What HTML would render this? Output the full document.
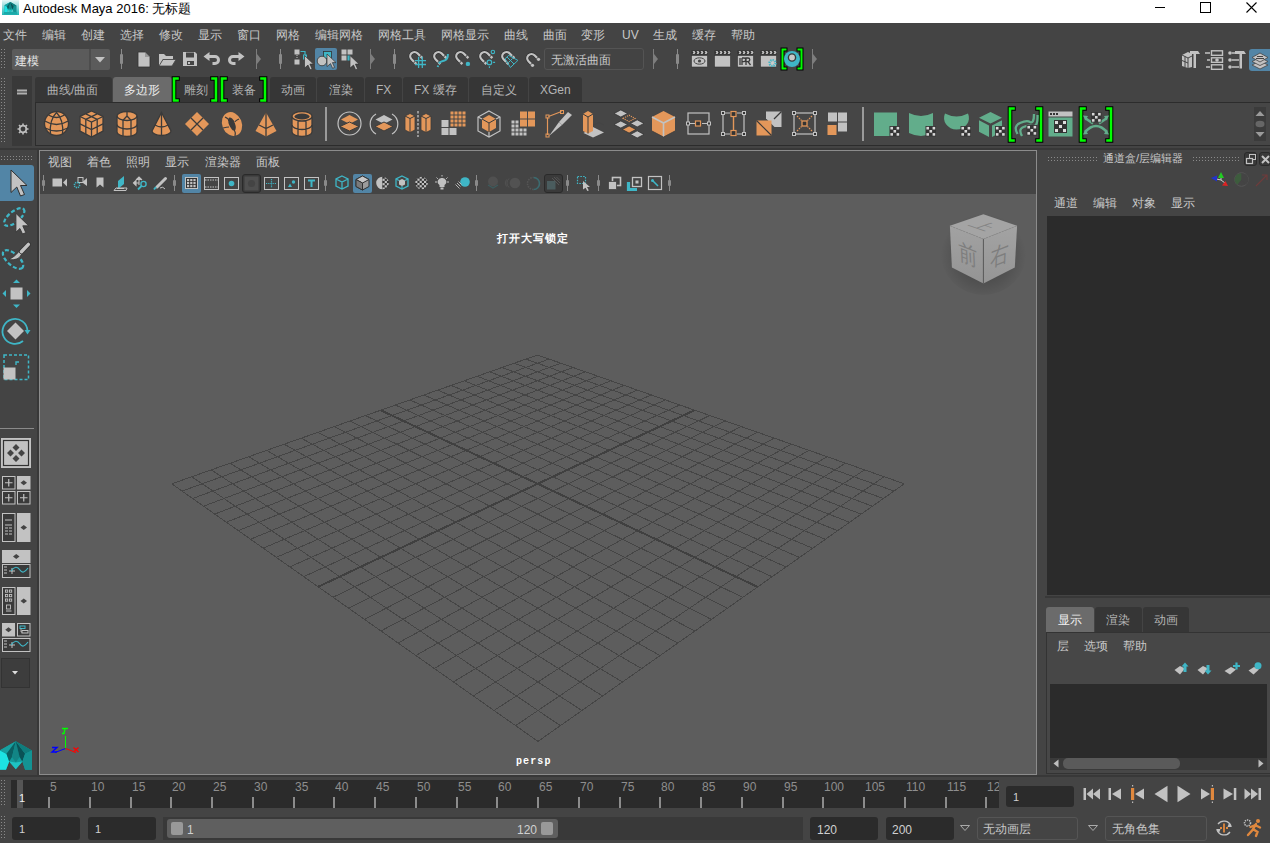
<!DOCTYPE html><html><head><meta charset="utf-8"><style>
*{box-sizing:border-box;margin:0;padding:0}
html,body{width:1270px;height:843px;overflow:hidden;background:#444444}
body{position:relative;font-family:"Liberation Sans",sans-serif;font-size:12px;color:#c8c8c8}
.a{position:absolute}
.t{position:absolute;white-space:nowrap;line-height:1;font-size:12px;color:#c8c8c8}
svg{position:absolute;overflow:visible}
</style></head><body><div class="a" style="left:0px;top:0px;width:1270px;height:23px;background:#fff"></div>
<svg style="left:2px;top:0px;" width="17" height="16" viewBox="0 0 17 16"><defs><linearGradient id="tg" x1="0" y1="0" x2="0" y2="1"><stop offset="0" stop-color="#e6f6f6"/><stop offset="1" stop-color="#1fb5b5"/></linearGradient></defs><rect x="0" y="0" width="17" height="15" fill="url(#tg)"/><g transform="translate(2.5 1.5) scale(0.37)"><path d="M0 10.2L15.8 1.2L31.9 10.5V29.8H25.1L22.4 21.6L15.8 29.3L9.2 21.6L6 29.8H0Z" fill="#129a9a"/><path d="M0 10.5L6.5 14L9.2 21.6L6 29.8H0Z" fill="#1de3e3"/><path d="M0 10.2L15.8 1.2L6.5 13.8Z" fill="#17a0a0"/><path d="M15.8 1.2L6.5 13.8L9.2 21.6L12 17Z" fill="#0b5f62"/><path d="M15.8 1.2L12 17L15.8 22.5L19.6 17Z" fill="#128585"/><path d="M15.8 1.2L19.6 17L22.4 21.6L25.1 13.8Z" fill="#0a5256"/><path d="M15.8 1.2L31.9 10.5L25.1 13.8Z" fill="#0f7c7c"/><path d="M25.1 13.8L31.9 10.5V29.8H25.1L22.4 21.6Z" fill="#149393"/><path d="M9.2 21.6L15.8 22.5L22.4 21.6L15.8 29.3Z" fill="#1ec2c2"/></g><rect x="2" y="12" width="13" height="2.5" fill="#1aa9a9"/></svg>
<div class="t" style="left:23px;top:2px;font-size:13px;color:#000;">Autodesk Maya 2016: 无标题</div>
<div class="a" style="left:1155px;top:7px;width:10px;height:1px;background:#000"></div>
<div class="a" style="left:1200px;top:2px;width:11px;height:11px;border:1px solid #000"></div>
<svg style="left:1246px;top:2px;" width="11" height="11" viewBox="0 0 11 11"><path d="M0.5 0.5L10.5 10.5M10.5 0.5L0.5 10.5" stroke="#000" stroke-width="1.1"/></svg>
<div class="t" style="left:3px;top:29px;font-size:12px;color:#c8c8c8;">文件</div>
<div class="t" style="left:42px;top:29px;font-size:12px;color:#c8c8c8;">编辑</div>
<div class="t" style="left:81px;top:29px;font-size:12px;color:#c8c8c8;">创建</div>
<div class="t" style="left:120px;top:29px;font-size:12px;color:#c8c8c8;">选择</div>
<div class="t" style="left:159px;top:29px;font-size:12px;color:#c8c8c8;">修改</div>
<div class="t" style="left:198px;top:29px;font-size:12px;color:#c8c8c8;">显示</div>
<div class="t" style="left:237px;top:29px;font-size:12px;color:#c8c8c8;">窗口</div>
<div class="t" style="left:276px;top:29px;font-size:12px;color:#c8c8c8;">网格</div>
<div class="t" style="left:315px;top:29px;font-size:12px;color:#c8c8c8;">编辑网格</div>
<div class="t" style="left:378px;top:29px;font-size:12px;color:#c8c8c8;">网格工具</div>
<div class="t" style="left:441px;top:29px;font-size:12px;color:#c8c8c8;">网格显示</div>
<div class="t" style="left:504px;top:29px;font-size:12px;color:#c8c8c8;">曲线</div>
<div class="t" style="left:543px;top:29px;font-size:12px;color:#c8c8c8;">曲面</div>
<div class="t" style="left:581px;top:29px;font-size:12px;color:#c8c8c8;">变形</div>
<div class="t" style="left:622px;top:29px;font-size:12px;color:#c8c8c8;">UV</div>
<div class="t" style="left:653px;top:29px;font-size:12px;color:#c8c8c8;">生成</div>
<div class="t" style="left:692px;top:29px;font-size:12px;color:#c8c8c8;">缓存</div>
<div class="t" style="left:731px;top:29px;font-size:12px;color:#c8c8c8;">帮助</div>
<div class="a" style="left:1px;top:49px;width:1px;height:1px;background:#8a8a8a;box-shadow:3px 0px #8a8a8a,0px 3px #8a8a8a,3px 3px #8a8a8a,0px 6px #8a8a8a,3px 6px #8a8a8a,0px 9px #8a8a8a,3px 9px #8a8a8a,0px 12px #8a8a8a,3px 12px #8a8a8a,0px 15px #8a8a8a,3px 15px #8a8a8a,0px 18px #8a8a8a,3px 18px #8a8a8a"></div>
<div class="a" style="left:12px;top:49px;width:98px;height:21px;background:#5b5b5b;border-radius:2px"></div>
<div class="a" style="left:89px;top:49px;width:2px;height:21px;background:#4d4d4d"></div>
<svg style="left:95px;top:57px;" width="11" height="6" viewBox="0 0 11 6"><path d="M0 0H10L5 5.5Z" fill="#c2c2c2"/></svg>
<div class="t" style="left:15px;top:55px;font-size:12px;color:#e6e6e6;">建模</div>
<div class="a" style="left:121px;top:49px;width:1px;height:20px;background:#8a8a8a"></div>
<div class="a" style="left:120px;top:54px;width:3px;height:10px;background:#8a8a8a;border-radius:1px"></div>
<svg style="left:137px;top:51px;" width="14" height="17" viewBox="0 0 14 17"><path d="M1 1H8L13 6V16H1Z" fill="#c2c2c2" stroke="#333" stroke-width=".8"/><path d="M8 1V6H13" fill="#9a9a9a"/></svg>
<svg style="left:158px;top:52px;" width="19" height="15" viewBox="0 0 19 15"><path d="M1 2H6L8 4H15V7H5L1 14Z" fill="#c2c2c2"/><path d="M5 7.5H18L14 14H1Z" fill="#c2c2c2" stroke="#444" stroke-width=".8"/></svg>
<svg style="left:182px;top:51px;" width="16" height="16" viewBox="0 0 16 16"><path d="M1 1H13L15 3V15H1Z" fill="#c2c2c2"/><rect x="4" y="1.5" width="8" height="5" fill="#444"/><rect x="5" y="10" width="7" height="4" fill="#444"/><rect x="6" y="11" width="2" height="2" fill="#c2c2c2"/></svg>
<svg style="left:203px;top:52px;" width="19" height="14" viewBox="0 0 19 14"><path d="M0.5 4.5L6.5 0V3H12A5 5 0 0 1 12 13H9.5V10H12A2 2 0 0 0 12 6H6.5V9Z" fill="#c2c2c2"/></svg>
<svg style="left:227px;top:52px;" width="19" height="14" viewBox="0 0 19 14"><path d="M17.5 4.5L11.5 0V3H6A5 5 0 0 0 6 13H8.5V10H6A2 2 0 0 1 6 6H11.5V9Z" fill="#c2c2c2"/></svg>
<div class="a" style="left:256px;top:49px;width:1px;height:20px;background:#7d7d7d"></div>
<svg style="left:257px;top:54px;" width="5" height="10" viewBox="0 0 5 10"><path d="M0 0L4 5L0 10Z" fill="#7d7d7d"/></svg>
<div class="a" style="left:280px;top:49px;width:1px;height:20px;background:#8a8a8a"></div>
<div class="a" style="left:279px;top:54px;width:3px;height:10px;background:#8a8a8a;border-radius:1px"></div>
<svg style="left:294px;top:49px;" width="20" height="20" viewBox="0 0 20 20"><rect x="0.5" y="0.5" width="5" height="5" fill="#c2c2c2"/><rect x="0.5" y="10.5" width="5" height="5" fill="#c2c2c2"/><path d="M3 6V10" stroke="#c2c2c2" stroke-width="1" stroke-dasharray="1 1"/><path d="M6.5 2.5H11V6" stroke="#3fb6c6" stroke-width="1.2" fill="none"/><rect x="9" y="5.5" width="4" height="5" fill="#3fb6c6"/><path d="M0 0L9 8.6H5.4L7.6 13.4L5.6 14.3L3.5 9.6L0 12.6Z" transform="translate(10.5 6.5)" fill="#c2c2c2" stroke="#333" stroke-width=".7"/></svg>
<div class="a" style="left:315px;top:48px;width:22px;height:22px;background:#5285a6;border-radius:2px"></div>
<svg style="left:316px;top:49px;" width="20" height="20" viewBox="0 0 20 20"><rect x="7.5" y="2.5" width="8" height="7" fill="#3fb6c6" stroke="#333" stroke-width=".8"/><circle cx="6" cy="12" r="4.8" fill="#c2c2c2" stroke="#333" stroke-width=".8"/><path d="M0 0L9 8.6H5.4L7.6 13.4L5.6 14.3L3.5 9.6L0 12.6Z" transform="translate(11 5)" fill="#c2c2c2" stroke="#333" stroke-width=".7"/></svg>
<svg style="left:341px;top:49px;" width="20" height="20" viewBox="0 0 20 20"><rect x="0.5" y="0.5" width="5" height="5" fill="#c2c2c2"/><rect x="6.5" y="0.5" width="5" height="5" fill="#c2c2c2"/><rect x="0.5" y="6.5" width="5" height="5" fill="#c2c2c2"/><rect x="6.5" y="6.5" width="3" height="5" fill="#3fb6c6"/><path d="M0 0L9 8.6H5.4L7.6 13.4L5.6 14.3L3.5 9.6L0 12.6Z" transform="translate(9 6.5)" fill="#c2c2c2" stroke="#333" stroke-width=".7"/></svg>
<div class="a" style="left:370px;top:49px;width:1px;height:20px;background:#7d7d7d"></div>
<svg style="left:371px;top:54px;" width="5" height="10" viewBox="0 0 5 10"><path d="M0 0L4 5L0 10Z" fill="#7d7d7d"/></svg>
<div class="a" style="left:394px;top:49px;width:1px;height:20px;background:#8a8a8a"></div>
<div class="a" style="left:393px;top:54px;width:3px;height:10px;background:#8a8a8a;border-radius:1px"></div>
<svg style="left:408px;top:50px;" width="20" height="19" viewBox="0 0 20 19"><path d="M6.1 11.9L3.5 9.3A4.24 4.24 0 0 1 9.5 3.3L12.1 5.9" stroke="#2e2e2e" stroke-width="3.4" fill="none"/><path d="M6.1 11.9L3.5 9.3A4.24 4.24 0 0 1 9.5 3.3L12.1 5.9" stroke="#c2c2c2" stroke-width="2.3" fill="none"/><path d="M7.5 11.6L9.2 13.3L7.5 15L5.8 13.3Z M13.5 5.6L15.2 7.3L13.5 9L11.8 7.3Z" fill="#c2c2c2"/><path d="M10.6 6.8V17.9M14.3 6.8V17.9M7 10.6H18M7 14.5H18" stroke="#3fb6c6" stroke-width="1.3"/></svg>
<svg style="left:432px;top:50px;" width="20" height="19" viewBox="0 0 20 19"><path d="M6.1 11.9L3.5 9.3A4.24 4.24 0 0 1 9.5 3.3L12.1 5.9" stroke="#2e2e2e" stroke-width="3.4" fill="none"/><path d="M6.1 11.9L3.5 9.3A4.24 4.24 0 0 1 9.5 3.3L12.1 5.9" stroke="#c2c2c2" stroke-width="2.3" fill="none"/><path d="M7.5 11.6L9.2 13.3L7.5 15L5.8 13.3Z M13.5 5.6L15.2 7.3L13.5 9L11.8 7.3Z" fill="#c2c2c2"/><path d="M15.9 4.1Q16 9.5 12.5 10.6Q8 11.6 7 13.5M6.2 15.5L5.7 17" stroke="#3fb6c6" stroke-width="2" fill="none"/></svg>
<svg style="left:454px;top:50px;" width="20" height="19" viewBox="0 0 20 19"><path d="M6.1 11.9L3.5 9.3A4.24 4.24 0 0 1 9.5 3.3L12.1 5.9" stroke="#2e2e2e" stroke-width="3.4" fill="none"/><path d="M6.1 11.9L3.5 9.3A4.24 4.24 0 0 1 9.5 3.3L12.1 5.9" stroke="#c2c2c2" stroke-width="2.3" fill="none"/><path d="M7.5 11.6L9.2 13.3L7.5 15L5.8 13.3Z M13.5 5.6L15.2 7.3L13.5 9L11.8 7.3Z" fill="#c2c2c2"/><circle cx="13.9" cy="13.9" r="2.2" fill="#3fb6c6"/></svg>
<svg style="left:478px;top:50px;" width="20" height="19" viewBox="0 0 20 19"><path d="M6.1 11.9L3.5 9.3A4.24 4.24 0 0 1 9.5 3.3L12.1 5.9" stroke="#2e2e2e" stroke-width="3.4" fill="none"/><path d="M6.1 11.9L3.5 9.3A4.24 4.24 0 0 1 9.5 3.3L12.1 5.9" stroke="#c2c2c2" stroke-width="2.3" fill="none"/><path d="M7.5 11.6L9.2 13.3L7.5 15L5.8 13.3Z M13.5 5.6L15.2 7.3L13.5 9L11.8 7.3Z" fill="#c2c2c2"/><circle cx="14.9" cy="1.9" r="1.7" fill="none" stroke="#3fb6c6" stroke-width="1.1"/><circle cx="11.4" cy="12.4" r="2.3" fill="none" stroke="#3fb6c6" stroke-width="1.2"/><path d="M15.1 12.4H17.1M11.4 16.3V17.9" stroke="#3fb6c6" stroke-width="1.1"/></svg>
<svg style="left:500px;top:50px;" width="20" height="19" viewBox="0 0 20 19"><path d="M6.1 11.9L3.5 9.3A4.24 4.24 0 0 1 9.5 3.3L12.1 5.9" stroke="#2e2e2e" stroke-width="3.4" fill="none"/><path d="M6.1 11.9L3.5 9.3A4.24 4.24 0 0 1 9.5 3.3L12.1 5.9" stroke="#c2c2c2" stroke-width="2.3" fill="none"/><path d="M7.5 11.6L9.2 13.3L7.5 15L5.8 13.3Z M13.5 5.6L15.2 7.3L13.5 9L11.8 7.3Z" fill="#c2c2c2"/><path d="M8.6 5.3L17.9 10.4L10.4 17.5L5.1 8.8Z" fill="none" stroke="#3fb6c6" stroke-width="1"/><path d="M7 7L14 14M8.5 12.5L12.5 8.5" stroke="#3fb6c6" stroke-width="1"/></svg>
<svg style="left:525px;top:52px;" width="20" height="19" viewBox="0 0 20 19"><path d="M6.1 11.9L3.5 9.3A4.24 4.24 0 0 1 9.5 3.3L12.1 5.9" stroke="#2e2e2e" stroke-width="3.4" fill="none"/><path d="M6.1 11.9L3.5 9.3A4.24 4.24 0 0 1 9.5 3.3L12.1 5.9" stroke="#c2c2c2" stroke-width="2.3" fill="none"/><circle cx="7.5" cy="13.3" r="1.6" fill="#c2c2c2"/><circle cx="13.5" cy="7.3" r="1.6" fill="#c2c2c2"/></svg>
<div class="a" style="left:544px;top:48px;width:100px;height:22px;border:1px solid #545454;border-radius:3px;background:#434343"></div>
<div class="t" style="left:551px;top:54px;font-size:12px;color:#c8c8c8;">无激活曲面</div>
<div class="a" style="left:653px;top:49px;width:1px;height:20px;background:#7d7d7d"></div>
<svg style="left:654px;top:54px;" width="5" height="10" viewBox="0 0 5 10"><path d="M0 0L4 5L0 10Z" fill="#7d7d7d"/></svg>
<div class="a" style="left:677px;top:49px;width:1px;height:20px;background:#8a8a8a"></div>
<div class="a" style="left:676px;top:54px;width:3px;height:10px;background:#8a8a8a;border-radius:1px"></div>
<svg style="left:691px;top:50px;" width="17" height="18" viewBox="0 0 17 18"><rect x="0.5" y="0.5" width="16" height="4" fill="#2e2e2e"/><path d="M1.5 1H3.5L4.5 2.5L3.5 4H1.5L2.5 2.5ZM5.5 1H7.5L8.5 2.5L7.5 4H5.5L6.5 2.5ZM9.5 1H11.5L12.5 2.5L11.5 4H9.5L10.5 2.5ZM13.5 1H15.5L16.5 2.5L15.5 4H13.5L14.5 2.5Z" fill="#c2c2c2"/><rect x="0.5" y="5.5" width="16" height="11.5" fill="#c2c2c2" stroke="#333" stroke-width=".6"/><ellipse cx="8.5" cy="11" rx="5.5" ry="3.2" fill="none" stroke="#444" stroke-width="1"/><circle cx="8.5" cy="11" r="1.6" fill="#444"/></svg>
<svg style="left:714px;top:50px;" width="17" height="18" viewBox="0 0 17 18"><rect x="0.5" y="0.5" width="16" height="4" fill="#2e2e2e"/><path d="M1.5 1H3.5L4.5 2.5L3.5 4H1.5L2.5 2.5ZM5.5 1H7.5L8.5 2.5L7.5 4H5.5L6.5 2.5ZM9.5 1H11.5L12.5 2.5L11.5 4H9.5L10.5 2.5ZM13.5 1H15.5L16.5 2.5L15.5 4H13.5L14.5 2.5Z" fill="#c2c2c2"/><rect x="0.5" y="5.5" width="16" height="11.5" fill="#c2c2c2" stroke="#333" stroke-width=".6"/></svg>
<svg style="left:737px;top:50px;" width="17" height="18" viewBox="0 0 17 18"><rect x="0.5" y="0.5" width="16" height="4" fill="#2e2e2e"/><path d="M1.5 1H3.5L4.5 2.5L3.5 4H1.5L2.5 2.5ZM5.5 1H7.5L8.5 2.5L7.5 4H5.5L6.5 2.5ZM9.5 1H11.5L12.5 2.5L11.5 4H9.5L10.5 2.5ZM13.5 1H15.5L16.5 2.5L15.5 4H13.5L14.5 2.5Z" fill="#c2c2c2"/><rect x="0.5" y="5.5" width="16" height="11.5" fill="#c2c2c2" stroke="#333" stroke-width=".6"/><path d="M3 8V15M5 8V15H5M5 8H7A1.8 1.8 0 0 1 7 11.6H5M9 15V8H11A1.8 1.8 0 0 1 11 11.6H9M11 11.6L13.5 15" stroke="#3a3a3a" stroke-width="1.3" fill="none"/></svg>
<svg style="left:760px;top:50px;" width="17" height="18" viewBox="0 0 17 18"><rect x="0.5" y="0.5" width="16" height="4" fill="#2e2e2e"/><path d="M1.5 1H3.5L4.5 2.5L3.5 4H1.5L2.5 2.5ZM5.5 1H7.5L8.5 2.5L7.5 4H5.5L6.5 2.5ZM9.5 1H11.5L12.5 2.5L11.5 4H9.5L10.5 2.5ZM13.5 1H15.5L16.5 2.5L15.5 4H13.5L14.5 2.5Z" fill="#c2c2c2"/><rect x="0.5" y="5.5" width="16" height="11.5" fill="#c2c2c2" stroke="#333" stroke-width=".6"/><circle cx="12.5" cy="13" r="3" fill="none" stroke="#3fb6c6" stroke-width="2.2" stroke-dasharray="1.3 1"/><circle cx="12.5" cy="13" r="1.2" fill="#ccc"/></svg>
<svg style="left:781px;top:48px;" width="22" height="22" viewBox="0 0 22 22"><path d="M4.5 1.5H1.5V20.5H4.5M17.5 1.5H20.5V20.5H17.5" stroke="#000" stroke-width="4" fill="none" stroke-linecap="square"/><path d="M4.5 1.5H1.5V20.5H4.5M17.5 1.5H20.5V20.5H17.5" stroke="#00ff00" stroke-width="2" fill="none" stroke-linecap="square"/><circle cx="11" cy="11" r="8" fill="#3fb6c6"/><circle cx="11" cy="9.5" r="3.6" fill="#c8c8c8" stroke="#3a3a3a" stroke-width="1.4"/></svg>
<div class="a" style="left:812px;top:49px;width:1px;height:20px;background:#7d7d7d"></div>
<svg style="left:813px;top:54px;" width="5" height="10" viewBox="0 0 5 10"><path d="M0 0L4 5L0 10Z" fill="#7d7d7d"/></svg>
<svg style="left:1181px;top:50px;" width="20" height="19" viewBox="0 0 20 19"><path d="M1 5L7 2L11 4V17L7 18L1 16Z" fill="#c2c2c2"/><path d="M1 5L7 8V18M7 8L11 6M1 10.5L7 13M4 6.5V17" stroke="#444" stroke-width="1" fill="none"/><path d="M9 1H17L19 4H9Z" fill="#c2c2c2"/><rect x="12.5" y="4" width="2.5" height="14" fill="#c2c2c2"/></svg>
<svg style="left:1204px;top:50px;" width="20" height="19" viewBox="0 0 20 19"><path d="M1 3H6M3 10H6M2 17H6" stroke="#c2c2c2" stroke-width="1.5"/><rect x="7.5" y="0.8" width="11" height="4.5" stroke="#c2c2c2" stroke-width="1.4" fill="none"/><rect x="7.5" y="7.8" width="11" height="4.5" stroke="#c2c2c2" stroke-width="1.4" fill="none"/><circle cx="13" cy="10" r="1.8" fill="#c2c2c2"/><rect x="7.5" y="14.8" width="11" height="4.5" stroke="#c2c2c2" stroke-width="1.4" fill="none"/></svg>
<svg style="left:1228px;top:50px;" width="19" height="19" viewBox="0 0 19 19"><circle cx="2" cy="3" r="1.8" fill="#c2c2c2"/><circle cx="2" cy="10" r="1.8" fill="#c2c2c2"/><circle cx="2" cy="17" r="1.8" fill="#c2c2c2"/><path d="M4 3H7M4 10H11M4 17H11" stroke="#c2c2c2" stroke-width="1.5"/><path d="M7 1H16L18 4H7Z" fill="#c2c2c2"/><rect x="11.5" y="4" width="2.5" height="14.5" fill="#c2c2c2"/></svg>
<div class="a" style="left:1249px;top:49px;width:21px;height:22px;background:#5285a6;border-radius:3px 0 0 3px"></div>
<svg style="left:1251px;top:51px;" width="18" height="18" viewBox="0 0 18 18"><path d="M9 10L17 14L9 18L1 14Z" fill="#c2c2c2" stroke="#444" stroke-width=".8"/><path d="M9 6.5L17 10.5L9 14.5L1 10.5Z" fill="#c2c2c2" stroke="#444" stroke-width=".8"/><path d="M9 2L17 6.5L9 11L1 6.5Z" fill="#c2c2c2" stroke="#444" stroke-width=".8"/><path d="M6 5.5H12M5 7.5H13" stroke="#444" stroke-width="1"/></svg>
<div class="a" style="left:1px;top:78px;width:1px;height:1px;background:#8a8a8a;box-shadow:3px 0px #8a8a8a,0px 3px #8a8a8a,3px 3px #8a8a8a,0px 6px #8a8a8a,3px 6px #8a8a8a,0px 9px #8a8a8a,3px 9px #8a8a8a,0px 12px #8a8a8a,3px 12px #8a8a8a,0px 15px #8a8a8a,3px 15px #8a8a8a,0px 18px #8a8a8a,3px 18px #8a8a8a,0px 21px #8a8a8a,3px 21px #8a8a8a,0px 24px #8a8a8a,3px 24px #8a8a8a,0px 27px #8a8a8a,3px 27px #8a8a8a,0px 30px #8a8a8a,3px 30px #8a8a8a,0px 33px #8a8a8a,3px 33px #8a8a8a,0px 36px #8a8a8a,3px 36px #8a8a8a,0px 39px #8a8a8a,3px 39px #8a8a8a,0px 42px #8a8a8a,3px 42px #8a8a8a,0px 45px #8a8a8a,3px 45px #8a8a8a,0px 48px #8a8a8a,3px 48px #8a8a8a,0px 51px #8a8a8a,3px 51px #8a8a8a,0px 54px #8a8a8a,3px 54px #8a8a8a,0px 57px #8a8a8a,3px 57px #8a8a8a,0px 60px #8a8a8a,3px 60px #8a8a8a,0px 63px #8a8a8a,3px 63px #8a8a8a"></div>
<div class="a" style="left:12px;top:76px;width:20px;height:70px;background:#393939"></div>
<svg style="left:17px;top:89px;" width="11" height="6" viewBox="0 0 11 6"><rect x="0" y="0.5" width="10" height="2" fill="#b0b0b0"/><rect x="0" y="3.5" width="10" height="2" fill="#b0b0b0"/></svg>
<svg style="left:17px;top:123px;" width="12" height="12" viewBox="0 0 12 12"><circle cx="6" cy="6" r="3.3" fill="none" stroke="#bdbdbd" stroke-width="1.8"/><path d="M6 0.5V2.5M6 9.5V11.5M0.5 6H2.5M9.5 6H11.5M2 2L3.4 3.4M8.6 8.6L10 10M10 2L8.6 3.4M3.4 8.6L2 10" stroke="#bdbdbd" stroke-width="1.6"/></svg>
<div class="a" style="left:35px;top:77px;width:77px;height:25px;background:#363636;border-radius:3px 3px 0 0"></div>
<div class="t" style="left:47px;top:84px;font-size:12px;color:#b4b4b4;">曲线/曲面</div>
<div class="a" style="left:113px;top:77px;width:59px;height:25px;background:#6b6b6b;border-radius:3px 3px 0 0"></div>
<div class="t" style="left:124px;top:84px;font-size:12px;color:#eeeeee;">多边形</div>
<div class="a" style="left:172px;top:77px;width:47px;height:25px;background:#363636;border-radius:3px 3px 0 0"></div>
<div class="t" style="left:184px;top:84px;font-size:12px;color:#b4b4b4;">雕刻</div>
<div class="a" style="left:220px;top:77px;width:48px;height:25px;background:#363636;border-radius:3px 3px 0 0"></div>
<div class="t" style="left:232px;top:84px;font-size:12px;color:#b4b4b4;">装备</div>
<div class="a" style="left:270px;top:77px;width:46px;height:25px;background:#363636;border-radius:3px 3px 0 0"></div>
<div class="t" style="left:281px;top:84px;font-size:12px;color:#b4b4b4;">动画</div>
<div class="a" style="left:317px;top:77px;width:47px;height:25px;background:#363636;border-radius:3px 3px 0 0"></div>
<div class="t" style="left:329px;top:84px;font-size:12px;color:#b4b4b4;">渲染</div>
<div class="a" style="left:365px;top:77px;width:37px;height:25px;background:#363636;border-radius:3px 3px 0 0"></div>
<div class="t" style="left:376px;top:84px;font-size:12px;color:#b4b4b4;">FX</div>
<div class="a" style="left:403px;top:77px;width:65px;height:25px;background:#363636;border-radius:3px 3px 0 0"></div>
<div class="t" style="left:414px;top:84px;font-size:12px;color:#b4b4b4;">FX 缓存</div>
<div class="a" style="left:469px;top:77px;width:59px;height:25px;background:#363636;border-radius:3px 3px 0 0"></div>
<div class="t" style="left:481px;top:84px;font-size:12px;color:#b4b4b4;">自定义</div>
<div class="a" style="left:529px;top:77px;width:53px;height:25px;background:#363636;border-radius:3px 3px 0 0"></div>
<div class="t" style="left:540px;top:84px;font-size:12px;color:#b4b4b4;">XGen</div>
<svg style="left:172px;top:77px;" width="7" height="25" viewBox="0 0 7 25"><path d="M5.5 1.5H2V23.5H5.5" stroke="#000" stroke-width="4.6" fill="none" stroke-linecap="square"/><path d="M5.5 1.5H2V23.5H5.5" stroke="#00ff00" stroke-width="2.6" fill="none" stroke-linecap="square"/></svg>
<svg style="left:212px;top:77px;" width="7" height="25" viewBox="0 0 7 25"><path d="M0.5 1.5H4V23.5H0.5" stroke="#000" stroke-width="4.6" fill="none" stroke-linecap="square"/><path d="M0.5 1.5H4V23.5H0.5" stroke="#00ff00" stroke-width="2.6" fill="none" stroke-linecap="square"/></svg>
<svg style="left:220px;top:77px;" width="7" height="25" viewBox="0 0 7 25"><path d="M5.5 1.5H2V23.5H5.5" stroke="#000" stroke-width="4.6" fill="none" stroke-linecap="square"/><path d="M5.5 1.5H2V23.5H5.5" stroke="#00ff00" stroke-width="2.6" fill="none" stroke-linecap="square"/></svg>
<svg style="left:261px;top:77px;" width="7" height="25" viewBox="0 0 7 25"><path d="M0.5 1.5H4V23.5H0.5" stroke="#000" stroke-width="4.6" fill="none" stroke-linecap="square"/><path d="M0.5 1.5H4V23.5H0.5" stroke="#00ff00" stroke-width="2.6" fill="none" stroke-linecap="square"/></svg>
<div class="a" style="left:35px;top:102px;width:1235px;height:44px;border:1px solid #2c2c2c;border-right:none;background:#464646"></div>
<svg style="left:44px;top:111px;" width="26" height="26" viewBox="0 0 26 26"><circle cx="12.5" cy="12.5" r="12" fill="#e3975a"/><g stroke="#3a3a3a" stroke-width="1.3" fill="none"><circle cx="12.5" cy="12.5" r="12"/><path d="M4.5 4Q12.5 9 20.5 4M0.8 10Q12.5 17 24.2 10M1.2 17Q12.5 23 23.8 17"/><path d="M12.5 1.5Q5 9 6.5 23.5M12.5 1.5Q20 9 18.5 23.5"/></g></svg>
<svg style="left:79px;top:110px;" width="25" height="28" viewBox="0 0 25 28"><path d="M12.5 1L24 6.5V21L12.5 27L1 21V6.5Z" fill="#e3975a"/><g stroke="#3a3a3a" stroke-width="1.3" fill="none"><path d="M12.5 1L24 6.5V21L12.5 27L1 21V6.5Z"/><path d="M1 6.5L12.5 12L24 6.5M12.5 12V27"/><path d="M6.8 3.8L18.2 9.3M18.2 3.8L6.8 9.3M6.8 9.3V24M18.2 9.3V24M1 13.8L12.5 19.5L24 13.8"/></g></svg>
<svg style="left:116px;top:111px;" width="22" height="26" viewBox="0 0 22 26"><path d="M1 5A10 4.5 0 0 1 21 5V21A10 4.5 0 0 1 1 21Z" fill="#e3975a"/><g stroke="#3a3a3a" stroke-width="1.3" fill="none"><path d="M1 5A10 4.5 0 0 1 21 5V21A10 4.5 0 0 1 1 21Z"/><path d="M1 5A10 4.5 0 0 0 21 5M1 13.5A10 4.5 0 0 0 21 13.5"/><path d="M11 5V0.5M11 5L7 9.3V25.3M11 5L15 9.3V25.3"/></g></svg>
<svg style="left:151px;top:112px;" width="21" height="25" viewBox="0 0 21 25"><path d="M10.5 0.5L20 19A9.5 4.5 0 0 1 1 19Z" fill="#e3975a"/><g stroke="#3a3a3a" stroke-width="1.3" fill="none"><path d="M10.5 0.5L20 19A9.5 4.5 0 0 1 1 19Z"/><path d="M10.5 0.5V24M4 13Q10.5 17 17 13"/></g></svg>
<svg style="left:184px;top:111px;" width="26" height="26" viewBox="0 0 26 26"><path d="M13 1L25 13L13 25L1 13Z" fill="#e3975a"/><g stroke="#3a3a3a" stroke-width="1.3"><path d="M7 7L19 19M19 7L7 19"/></g></svg>
<svg style="left:221px;top:111px;" width="22" height="26" viewBox="0 0 22 26"><ellipse cx="11" cy="13" rx="9.8" ry="12.2" transform="rotate(-22 11 13)" fill="#e3975a"/><ellipse cx="11" cy="13" rx="3" ry="7" transform="rotate(-22 11 13)" fill="#3a3a3a"/><g stroke="#3a3a3a" stroke-width="1.2" fill="none"><path d="M4 6Q8 8 8 10M18 8Q14 10 14 11M2 17Q6 16 8 16M13 18Q15 22 14 25"/></g></svg>
<svg style="left:255px;top:112px;" width="22" height="25" viewBox="0 0 22 25"><path d="M11 0.5L21.5 19L11 24.5L0.5 19Z" fill="#e3975a"/><g stroke="#3a3a3a" stroke-width="1.3" fill="none"><path d="M11 0.5V24.5M4 13L11 16.5L18 13"/></g></svg>
<svg style="left:291px;top:111px;" width="22" height="26" viewBox="0 0 22 26"><path d="M1 5A10 4.5 0 0 1 21 5V21A10 4.5 0 0 1 1 21Z" fill="#e3975a"/><ellipse cx="11" cy="5.5" rx="7.5" ry="3" fill="#3a3a3a"/><g stroke="#3a3a3a" stroke-width="1.3" fill="none"><path d="M1 5A10 4.5 0 0 1 21 5V21A10 4.5 0 0 1 1 21Z"/><path d="M1 5.5A10 4.5 0 0 0 21 5.5M1 14A10 4.5 0 0 0 21 14M7 10V25M15 10V25"/></g></svg>
<div class="a" style="left:325px;top:107px;width:2px;height:34px;background:#9a9a9a"></div>
<svg style="left:337px;top:111px;" width="25" height="26" viewBox="0 0 25 26"><circle cx="12.5" cy="12.5" r="11.5" fill="none" stroke="#c2c2c2" stroke-width="1.2"/><path d="M12.5 4L21 8.5L12.5 13L4 8.5Z" fill="#e3975a"/><path d="M12.5 11L22 15.5L12.5 20L3 15.5Z" fill="#e3975a" stroke="#3a3a3a" stroke-width="1"/></svg>
<svg style="left:371px;top:111px;" width="26" height="26" viewBox="0 0 26 26"><path d="M5 3A11.5 11.5 0 0 0 5 23M21 3A11.5 11.5 0 0 1 21 23" fill="none" stroke="#c2c2c2" stroke-width="1.2"/><path d="M13 4L21.5 8.5L13 13L4.5 8.5Z" fill="#c2c2c2"/><path d="M13 11L22 15.5L13 20L4 15.5Z" fill="#e3975a" stroke="#3a3a3a" stroke-width="1"/></svg>
<svg style="left:404px;top:110px;" width="28" height="28" viewBox="0 0 28 28"><path d="M1 6L6 3.5L11 6V20L6 22.5L1 20Z" fill="#e3975a" stroke="#3a3a3a" stroke-width=".8"/><path d="M1 6L6 8.5L11 6M6 8.5V22.5" stroke="#3a3a3a" stroke-width="1" fill="none"/><path d="M17 6L22 3.5L27 6V20L22 22.5L17 20Z" fill="#e3975a" stroke="#3a3a3a" stroke-width=".8"/><path d="M17 6L22 8.5L27 6M22 8.5V22.5" stroke="#3a3a3a" stroke-width="1" fill="none"/><path d="M14 1V27" stroke="#c2c2c2" stroke-width="1.3" stroke-dasharray="2.5 1.5"/></svg>
<svg style="left:441px;top:111px;" width="25" height="25" viewBox="0 0 25 25"><g fill="#e3975a"><rect x="9.5" y="0.5" width="3" height="3"/><rect x="9.5" y="4.5" width="3" height="3"/><rect x="9.5" y="8.5" width="3" height="3"/><rect x="9.5" y="12.5" width="3" height="3"/><rect x="13.5" y="0.5" width="3" height="3"/><rect x="13.5" y="4.5" width="3" height="3"/><rect x="13.5" y="8.5" width="3" height="3"/><rect x="13.5" y="12.5" width="3" height="3"/><rect x="17.5" y="0.5" width="3" height="3"/><rect x="17.5" y="4.5" width="3" height="3"/><rect x="17.5" y="8.5" width="3" height="3"/><rect x="17.5" y="12.5" width="3" height="3"/><rect x="21.5" y="0.5" width="3" height="3"/><rect x="21.5" y="4.5" width="3" height="3"/><rect x="21.5" y="8.5" width="3" height="3"/><rect x="21.5" y="12.5" width="3" height="3"/></g><rect x="0.5" y="9" width="7" height="7" fill="#c2c2c2"/><rect x="0.5" y="17" width="7" height="7" fill="#c2c2c2"/><rect x="8.5" y="17" width="7" height="7" fill="#c2c2c2"/></svg>
<svg style="left:477px;top:110px;" width="24" height="28" viewBox="0 0 24 28"><path d="M12 1L23 7V21L12 27L1 21V7Z" fill="none" stroke="#c2c2c2" stroke-width="1.2"/><path d="M12 5L19 9V18L12 22L5 18V9Z" fill="#e3975a"/><path d="M5 9L12 13L19 9M12 13V22" stroke="#3a3a3a" stroke-width="1" fill="none"/><path d="M1 7L5 9M23 7L19 9M12 22V27" stroke="#c2c2c2" stroke-width="1.2"/></svg>
<svg style="left:511px;top:111px;" width="25" height="25" viewBox="0 0 25 25"><g fill="#e3975a"><rect x="9" y="0.5" width="7" height="7"/><rect x="17" y="0.5" width="7" height="7"/><rect x="9" y="8.5" width="7" height="7"/><rect x="17" y="8.5" width="7" height="7"/></g><g fill="#c2c2c2"><rect x="0.5" y="9.5" width="3" height="3"/><rect x="0.5" y="13.5" width="3" height="3"/><rect x="0.5" y="17.5" width="3" height="3"/><rect x="0.5" y="21.5" width="3" height="3"/><rect x="4.5" y="9.5" width="3" height="3"/><rect x="4.5" y="13.5" width="3" height="3"/><rect x="4.5" y="17.5" width="3" height="3"/><rect x="4.5" y="21.5" width="3" height="3"/><rect x="8.5" y="17.5" width="3" height="3"/><rect x="8.5" y="21.5" width="3" height="3"/><rect x="12.5" y="17.5" width="3" height="3"/><rect x="12.5" y="21.5" width="3" height="3"/></g></svg>
<svg style="left:545px;top:110px;" width="29" height="28" viewBox="0 0 29 28"><path d="M3.5 6.5L16.5 1.5M2.5 7.5V25" stroke="#e3975a" stroke-width="1.2"/><rect x="1" y="5" width="3" height="3" fill="none" stroke="#e3975a" stroke-width="1"/><rect x="15.5" y="0.5" width="3" height="3" fill="none" stroke="#e3975a" stroke-width="1"/><rect x="1" y="24" width="3" height="3" fill="none" stroke="#e3975a" stroke-width="1"/><path d="M23 2L27 5L17 15L14 12Z" fill="#c2c2c2"/><path d="M14 12L17 15L4 26Z" fill="#c2c2c2"/></svg>
<svg style="left:582px;top:110px;" width="24" height="28" viewBox="0 0 24 28"><path d="M11 17L22 22.5L11 27.5L1.5 23Z" fill="#c2c2c2"/><path d="M6 12L11.5 15L17 12.5L22 15" stroke="#444" stroke-width="1" fill="none"/><path d="M1 4L6 1L11 4V21L6 23.5L1 21Z" fill="#e3975a"/><path d="M1 4L6 7L11 4M6 7V23.5" stroke="#3a3a3a" stroke-width="1" fill="none"/></svg>
<svg style="left:613px;top:108px;" width="32" height="32" viewBox="0 0 32 32"><path d="M1.0 5.5L7.8 1.9L14.6 5.5L7.8 9.1Z" fill="#c2c2c2" stroke="#333" stroke-width=".8" /><path d="M10.100000000000001 10.4L16.1 7.2L22.1 10.4L16.1 13.600000000000001Z" fill="none" stroke="#e3975a" stroke-width="1.1" stroke-dasharray="1.2 1"/><path d="M17.4 15.4L24.2 11.8L31.0 15.4L24.2 19.0Z" fill="#c2c2c2" stroke="#333" stroke-width=".8" /><path d="M1.0 16.5L7.8 12.9L14.6 16.5L7.8 20.1Z" fill="#c2c2c2" stroke="#333" stroke-width=".8" /><path d="M9.3 21.5L16.1 17.9L22.900000000000002 21.5L16.1 25.1Z" fill="#e3975a" stroke="#333" stroke-width=".8" /><path d="M17.4 26.4L24.2 22.799999999999997L31.0 26.4L24.2 30.0Z" fill="#c2c2c2" stroke="#333" stroke-width=".8" /></svg>
<svg style="left:651px;top:110px;" width="25" height="28" viewBox="0 0 25 28"><path d="M12.5 1L24 7V21L12.5 27L1 21V7Z" fill="#e3975a"/><path d="M1 7L12.5 13L24 7M12.5 13V27" stroke="#c2c2c2" stroke-width="1.6" fill="none"/><path d="M1 21L12.5 27L24 21" stroke="#3a3a3a" stroke-width=".8" fill="none"/></svg>
<svg style="left:686px;top:112px;" width="25" height="23" viewBox="0 0 25 23"><rect x="2" y="1" width="21" height="21" fill="none" stroke="#c2c2c2" stroke-width="1.2"/><path d="M4 11.5H9M16 11.5H21" stroke="#c2c2c2" stroke-width="1.2"/><rect x="0.5" y="10" width="3" height="3" fill="#333" stroke="#c2c2c2" stroke-width="1"/><rect x="21.5" y="10" width="3" height="3" fill="#333" stroke="#c2c2c2" stroke-width="1"/><rect x="9.5" y="9" width="5" height="5" fill="#333" stroke="#e3975a" stroke-width="1.2"/></svg>
<svg style="left:721px;top:111px;" width="25" height="25" viewBox="0 0 25 25"><path d="M2 3V22M23 3V22M4 2H9M16 2H21M4 23H9M16 23H21" stroke="#c2c2c2" stroke-width="1.2"/><path d="M12.5 5V20" stroke="#e3975a" stroke-width="1.4"/><rect x="0.5" y="0.5" width="3" height="3" fill="#333" stroke="#c2c2c2"/><rect x="21.5" y="0.5" width="3" height="3" fill="#333" stroke="#c2c2c2"/><rect x="0.5" y="21.5" width="3" height="3" fill="#333" stroke="#c2c2c2"/><rect x="21.5" y="21.5" width="3" height="3" fill="#333" stroke="#c2c2c2"/><rect x="10" y="0.5" width="5" height="5" fill="#333" stroke="#e3975a" stroke-width="1.2"/><rect x="10" y="19.5" width="5" height="5" fill="#333" stroke="#e3975a" stroke-width="1.2"/></svg>
<svg style="left:756px;top:111px;" width="26" height="26" viewBox="0 0 26 26"><path d="M10 0.5H25.5V16H18.5L10 7.5Z" fill="#c2c2c2"/><path d="M18 8L25.5 0.5" stroke="#3a3a3a" stroke-width="1.2"/><rect x="0.5" y="9.5" width="15" height="15" fill="#e3975a"/><path d="M0.5 9.5L15.5 24.5" stroke="#3a3a3a" stroke-width="1.2"/></svg>
<svg style="left:792px;top:111px;" width="25" height="26" viewBox="0 0 25 26"><rect x="2" y="2" width="21" height="21" fill="none" stroke="#c2c2c2" stroke-width="1.2"/><rect x="0.5" y="0.5" width="3" height="3" fill="#333" stroke="#c2c2c2"/><rect x="21.5" y="0.5" width="3" height="3" fill="#333" stroke="#c2c2c2"/><rect x="0.5" y="21.5" width="3" height="3" fill="#333" stroke="#c2c2c2"/><rect x="21.5" y="21.5" width="3" height="3" fill="#333" stroke="#c2c2c2"/><path d="M5 5L9.5 9.5M20 5L15.5 9.5M5 20L9.5 15.5M20 20L15.5 15.5" stroke="#e3975a" stroke-width="1.2" stroke-dasharray="1.6 1"/><rect x="10" y="10" width="5" height="5" fill="#333" stroke="#e3975a" stroke-width="1.3"/></svg>
<svg style="left:827px;top:112px;" width="24" height="24" viewBox="0 0 24 24"><rect x="1" y="0.5" width="9" height="9" fill="#c2c2c2"/><rect x="11" y="0.5" width="9" height="9" fill="#c2c2c2"/><rect x="11" y="10.5" width="9" height="9" fill="#c2c2c2"/><rect x="0.5" y="13" width="9" height="10" fill="#e3975a"/></svg>
<div class="a" style="left:862px;top:107px;width:2px;height:34px;background:#9a9a9a"></div>
<svg style="left:874px;top:112px;" width="27" height="26" viewBox="0 0 27 26"><rect x="0" y="0.5" width="23" height="23.5" fill="#62ad8b"/><rect x="15.5" y="14" width="10.5" height="10.5" fill="#353535"/><rect x="16.4" y="14.9" width="2.6" height="2.6" fill="#d8d8d8"/><rect x="16.4" y="21.1" width="2.6" height="2.6" fill="#d8d8d8"/><rect x="19.5" y="18.0" width="2.6" height="2.6" fill="#d8d8d8"/><rect x="22.6" y="14.9" width="2.6" height="2.6" fill="#d8d8d8"/><rect x="22.6" y="21.1" width="2.6" height="2.6" fill="#d8d8d8"/></svg>
<svg style="left:909px;top:112px;" width="27" height="26" viewBox="0 0 27 26"><path d="M0 1Q12 7 24 1V21Q12 27 0 21Z" fill="#62ad8b"/><rect x="16.5" y="14" width="10.5" height="10.5" fill="#353535"/><rect x="17.4" y="14.9" width="2.6" height="2.6" fill="#d8d8d8"/><rect x="17.4" y="21.1" width="2.6" height="2.6" fill="#d8d8d8"/><rect x="20.5" y="18.0" width="2.6" height="2.6" fill="#d8d8d8"/><rect x="23.6" y="14.9" width="2.6" height="2.6" fill="#d8d8d8"/><rect x="23.6" y="21.1" width="2.6" height="2.6" fill="#d8d8d8"/></svg>
<svg style="left:944px;top:112px;" width="27" height="26" viewBox="0 0 27 26"><path d="M1 1.5Q12.5 7.5 24 1.5A12.5 11.5 0 1 1 1 1.5Z" fill="#62ad8b"/><rect x="16.5" y="14" width="10.5" height="10.5" fill="#353535"/><rect x="17.4" y="14.9" width="2.6" height="2.6" fill="#d8d8d8"/><rect x="17.4" y="21.1" width="2.6" height="2.6" fill="#d8d8d8"/><rect x="20.5" y="18.0" width="2.6" height="2.6" fill="#d8d8d8"/><rect x="23.6" y="14.9" width="2.6" height="2.6" fill="#d8d8d8"/><rect x="23.6" y="21.1" width="2.6" height="2.6" fill="#d8d8d8"/></svg>
<svg style="left:978px;top:111px;" width="28" height="27" viewBox="0 0 28 27"><path d="M12.5 1L24 6.8L12.5 12.5L1 6.8Z" fill="#62ad8b"/><path d="M1 9.3L11 14.5V26L1 20.8Z" fill="#62ad8b"/><path d="M14 14.5L24 9.3V20.8L14 26Z" fill="#62ad8b"/><rect x="17" y="15" width="10.5" height="10.5" fill="#353535"/><rect x="17.9" y="15.9" width="2.6" height="2.6" fill="#d8d8d8"/><rect x="17.9" y="22.1" width="2.6" height="2.6" fill="#d8d8d8"/><rect x="21.0" y="19.0" width="2.6" height="2.6" fill="#d8d8d8"/><rect x="24.1" y="15.9" width="2.6" height="2.6" fill="#d8d8d8"/><rect x="24.1" y="22.1" width="2.6" height="2.6" fill="#d8d8d8"/></svg>
<svg style="left:1008px;top:107px;" width="7" height="35" viewBox="0 0 7 35"><path d="M5.5 1.5H2V33.5H5.5" stroke="#000" stroke-width="4.6" fill="none" stroke-linecap="square"/><path d="M5.5 1.5H2V33.5H5.5" stroke="#00ff00" stroke-width="2.6" fill="none" stroke-linecap="square"/></svg>
<svg style="left:1037px;top:107px;" width="7" height="35" viewBox="0 0 7 35"><path d="M0.5 1.5H4V33.5H0.5" stroke="#000" stroke-width="4.6" fill="none" stroke-linecap="square"/><path d="M0.5 1.5H4V33.5H0.5" stroke="#00ff00" stroke-width="2.6" fill="none" stroke-linecap="square"/></svg>
<svg style="left:1014px;top:111px;" width="26" height="26" viewBox="0 0 26 26"><path d="M3.5 23Q-1 15 6 12Q13 9 16 11Q20 13 20 3M8 25Q4 18 9.5 16Q15 14 19 15Q24 16 23.5 4" stroke="#62ad8b" stroke-width="2.3" fill="none"/><rect x="12.5" y="14" width="10.5" height="10.5" fill="#353535"/><rect x="13.4" y="14.9" width="2.6" height="2.6" fill="#d8d8d8"/><rect x="13.4" y="21.1" width="2.6" height="2.6" fill="#d8d8d8"/><rect x="16.5" y="18.0" width="2.6" height="2.6" fill="#d8d8d8"/><rect x="19.6" y="14.9" width="2.6" height="2.6" fill="#d8d8d8"/><rect x="19.6" y="21.1" width="2.6" height="2.6" fill="#d8d8d8"/></svg>
<svg style="left:1048px;top:111px;" width="25" height="26" viewBox="0 0 25 26"><rect x="0.5" y="0.5" width="24" height="5" fill="#c2c2c2"/><rect x="2" y="2" width="2" height="2" fill="#333"/><rect x="5" y="2" width="2" height="2" fill="#333"/><rect x="8" y="2" width="2" height="2" fill="#333"/><rect x="0.5" y="6.5" width="24" height="19" fill="#62ad8b"/><rect x="6" y="9" width="13" height="13" fill="#333"/><rect x="7" y="10" width="3" height="3" fill="#ddd"/><rect x="7" y="18" width="3" height="3" fill="#ddd"/><rect x="11" y="14" width="3" height="3" fill="#ddd"/><rect x="15" y="10" width="3" height="3" fill="#ddd"/><rect x="15" y="18" width="3" height="3" fill="#ddd"/></svg>
<svg style="left:1079px;top:107px;" width="7" height="35" viewBox="0 0 7 35"><path d="M5.5 1.5H2V33.5H5.5" stroke="#000" stroke-width="4.6" fill="none" stroke-linecap="square"/><path d="M5.5 1.5H2V33.5H5.5" stroke="#00ff00" stroke-width="2.6" fill="none" stroke-linecap="square"/></svg>
<svg style="left:1107px;top:107px;" width="7" height="35" viewBox="0 0 7 35"><path d="M0.5 1.5H4V33.5H0.5" stroke="#000" stroke-width="4.6" fill="none" stroke-linecap="square"/><path d="M0.5 1.5H4V33.5H0.5" stroke="#00ff00" stroke-width="2.6" fill="none" stroke-linecap="square"/></svg>
<svg style="left:1082px;top:112px;" width="28" height="26" viewBox="0 0 28 26"><path d="M3 6L11 11.5M25 6L17 11.5M3 20Q14 8 25 20" stroke="#62ad8b" stroke-width="2.6" fill="none"/><path d="M1 3.5L6 4L3.5 8.5Z M27 3.5L22 4L24.5 8.5Z M1 22.5L6 22L3.5 17.5Z M27 22.5L22 22L24.5 17.5Z" fill="#62ad8b"/><rect x="9" y="0" width="10.5" height="10.5" fill="#353535"/><rect x="9.9" y="0.9" width="2.6" height="2.6" fill="#d8d8d8"/><rect x="9.9" y="7.1" width="2.6" height="2.6" fill="#d8d8d8"/><rect x="13.0" y="4.0" width="2.6" height="2.6" fill="#d8d8d8"/><rect x="16.1" y="0.9" width="2.6" height="2.6" fill="#d8d8d8"/><rect x="16.1" y="7.1" width="2.6" height="2.6" fill="#d8d8d8"/></svg>
<div class="a" style="left:1254px;top:107px;width:12px;height:34px;background:#3b3b3b"></div>
<svg style="left:1254px;top:109px;" width="12" height="30" viewBox="0 0 12 30"><path d="M1.5 7L6 2L10.5 7Z" fill="#9a9a9a"/><ellipse cx="6" cy="15" rx="4.5" ry="3.2" fill="#666"/><path d="M1.5 23L6 28L10.5 23Z" fill="#9a9a9a"/></svg>
<div class="a" style="left:0px;top:148px;width:1270px;height:2px;background:#383838"></div>
<div class="a" style="left:37px;top:150px;width:2px;height:627px;background:#383838"></div>
<div class="a" style="left:1px;top:156px;width:1px;height:1px;background:#8a8a8a;box-shadow:3px 0px #8a8a8a,6px 0px #8a8a8a,9px 0px #8a8a8a,12px 0px #8a8a8a,15px 0px #8a8a8a,18px 0px #8a8a8a,21px 0px #8a8a8a,24px 0px #8a8a8a,27px 0px #8a8a8a,30px 0px #8a8a8a,0px 3px #8a8a8a,3px 3px #8a8a8a,6px 3px #8a8a8a,9px 3px #8a8a8a,12px 3px #8a8a8a,15px 3px #8a8a8a,18px 3px #8a8a8a,21px 3px #8a8a8a,24px 3px #8a8a8a,27px 3px #8a8a8a,30px 3px #8a8a8a"></div>
<div class="a" style="left:0px;top:165px;width:34px;height:36px;background:#5285a6;border-radius:0 3px 3px 0"></div>
<svg style="left:10px;top:169px;" width="18" height="28" viewBox="0 0 18 28"><path d="M1 1L17 16.5H10.5L14.5 25.5L10.5 27L6.8 18L1 23.5Z" fill="#c2c2c2" stroke="#2f2f2f" stroke-width="1"/></svg>
<svg style="left:2px;top:206px;" width="28" height="29" viewBox="0 0 28 29"><ellipse cx="12.25" cy="11" rx="12.3" ry="5.4" transform="rotate(-39 12.25 11)" fill="none" stroke="#3fb6c6" stroke-width="2.2" stroke-dasharray="4 2.2"/><path d="M13.9 7.3L26.7 19.8H20.8L23.8 26.7L20.5 28L17.9 22.5L13.9 26.2Z" fill="#c2c2c2" stroke="#333" stroke-width=".9"/></svg>
<svg style="left:2px;top:242px;" width="29" height="30" viewBox="0 0 29 30"><ellipse cx="11.05" cy="17.5" rx="12.5" ry="5.8" transform="rotate(41 11.05 17.5)" fill="none" stroke="#3fb6c6" stroke-width="2.2" stroke-dasharray="4 2.2"/><path d="M26.4 2.4L19.4 9.7" stroke="#333" stroke-width="5" stroke-linecap="round"/><path d="M26.4 2.4L19.4 9.7" stroke="#c2c2c2" stroke-width="3.4" stroke-linecap="round"/><path d="M16.8 9.8L19.4 12.6Q16.5 18.8 7 17.6Q13 14.5 16.8 9.8Z" fill="#c2c2c2" stroke="#333" stroke-width=".8"/></svg>
<svg style="left:2px;top:279px;" width="29" height="30" viewBox="0 0 29 30"><rect x="8.5" y="8.5" width="12" height="12" fill="#c2c2c2"/><path d="M14.5 0.5L18 4H11Z" fill="#3fb6c6"/><path d="M14.5 29L18 25.5H11Z" fill="#3fb6c6"/><path d="M0.5 14.5L4 11V18Z" fill="#3fb6c6"/><path d="M28.5 14.5L25 11V18Z" fill="#3fb6c6"/></svg>
<svg style="left:1px;top:317px;" width="31" height="29" viewBox="0 0 31 29"><path d="M22 24A12.5 12.5 0 1 1 26.5 14" fill="none" stroke="#3fb6c6" stroke-width="1.8"/><path d="M23.5 13H29.5L26.5 17.5Z" fill="#3fb6c6"/><path d="M14.5 5.5L23 14L14.5 22.5L6 14Z" fill="#c2c2c2"/></svg>
<svg style="left:3px;top:354px;" width="27" height="27" viewBox="0 0 27 27"><rect x="1" y="1" width="24.5" height="24.5" fill="none" stroke="#3fb6c6" stroke-width="1.5" stroke-dasharray="3 2"/><rect x="0.5" y="13.5" width="12" height="12" fill="#c2c2c2"/><path d="M13 11V8H16" stroke="#3fb6c6" stroke-width="1.4" fill="none"/></svg>
<div class="a" style="left:0px;top:428px;width:34px;height:1px;background:#8a8a8a"></div>
<svg style="left:1px;top:438px;" width="30" height="30" viewBox="0 0 30 30"><rect x="1" y="1" width="28" height="28" fill="none" stroke="#c2c2c2" stroke-width="2"/><rect x="2.5" y="2.5" width="25" height="25" fill="#c2c2c2" stroke="#333" stroke-width="1.2"/><path d="M15 6L18.5 9.5L15 13L11.5 9.5ZM15 17L18.5 20.5L15 24L11.5 20.5ZM9.5 11.5L13 15L9.5 18.5L6 15ZM20.5 11.5L24 15L20.5 18.5L17 15Z" fill="#444"/></svg>
<svg style="left:2px;top:476px;" width="29" height="29" viewBox="0 0 29 29"><rect x="0.5" y="0.5" width="12.5" height="12.5" fill="#3a3a3a" stroke="#c2c2c2" stroke-width="1"/><path d="M3 6.75H10.5M6.75 3V10.5" stroke="#c2c2c2" stroke-width="1.2"/><rect x="15" y="0" width="13.5" height="13.5" fill="#c2c2c2"/><path d="M21.75 4.25L25.0 6.75L21.75 9.25L18.5 6.75Z" fill="#444"/><rect x="0.5" y="15.5" width="12.5" height="12.5" fill="#3a3a3a" stroke="#c2c2c2" stroke-width="1"/><path d="M3 21.75H10.5M6.75 18V25.5" stroke="#c2c2c2" stroke-width="1.2"/><rect x="15.5" y="15.5" width="12.5" height="12.5" fill="#3a3a3a" stroke="#c2c2c2" stroke-width="1"/><path d="M18 21.75H25.5M21.75 18V25.5" stroke="#c2c2c2" stroke-width="1.2"/></svg>
<svg style="left:2px;top:513px;" width="29" height="29" viewBox="0 0 29 29"><rect x="0.5" y="0.5" width="12.5" height="28" fill="#3a3a3a" stroke="#c2c2c2" stroke-width="1"/><path d="M3 7H10M3 12H10M3 15H6M7 15H10M3 18H6M7 18H10M3 21H6M7 21H10" stroke="#c2c2c2" stroke-width="1"/><rect x="15" y="0" width="13.5" height="29" fill="#c2c2c2"/><path d="M21.75 12.0L25.0 14.5L21.75 17.0L18.5 14.5Z" fill="#444"/></svg>
<svg style="left:2px;top:550px;" width="29" height="29" viewBox="0 0 29 29"><rect x="0" y="0" width="28.5" height="13" fill="#c2c2c2"/><path d="M14.25 4.0L17.5 6.5L14.25 9.0L11.0 6.5Z" fill="#444"/><rect x="0.5" y="14.5" width="27.5" height="13" fill="#3a3a3a" stroke="#c2c2c2" stroke-width="1"/><path d="M2 17H5M2 20H5M2 23H5M7 21H13M10 18V24" stroke="#c2c2c2" stroke-width="1"/><path d="M9 21Q14 14 18 20Q21 25 26 18" stroke="#3fb6c6" stroke-width="1.2" fill="none"/></svg>
<svg style="left:2px;top:587px;" width="29" height="28" viewBox="0 0 29 28"><rect x="0.5" y="0.5" width="12.5" height="27" fill="#3a3a3a" stroke="#c2c2c2" stroke-width="1"/><g fill="none" stroke="#c2c2c2" stroke-width=".9"><rect x="3.5" y="3" width="2.2" height="2.2"/><rect x="7.5" y="3" width="2.2" height="2.2"/><rect x="3.5" y="7.5" width="2.2" height="2.2"/><rect x="7.5" y="7.5" width="2.2" height="2.2"/><rect x="3.5" y="12" width="2.2" height="2.2"/><rect x="7.5" y="12" width="2.2" height="2.2"/><rect x="4.5" y="18" width="4" height="4"/></g><path d="M4 24H9.5" stroke="#c2c2c2"/><rect x="15" y="0" width="13.5" height="28" fill="#c2c2c2"/><path d="M21.75 11.5L25.0 14L21.75 16.5L18.5 14Z" fill="#444"/></svg>
<svg style="left:2px;top:623px;" width="29" height="29" viewBox="0 0 29 29"><rect x="0" y="0" width="13" height="13.5" fill="#c2c2c2"/><path d="M6.5 4.25L9.75 6.75L6.5 9.25L3.25 6.75Z" fill="#444"/><rect x="15.5" y="0.5" width="12.5" height="12.5" fill="#3a3a3a" stroke="#c2c2c2" stroke-width="1"/><rect x="18" y="3" width="5" height="2.5" fill="none" stroke="#3fb6c6" stroke-width="1"/><rect x="20" y="7.5" width="6" height="2.5" fill="none" stroke="#c2c2c2" stroke-width="1"/><path d="M19 5.5V9H20" stroke="#c2c2c2" stroke-width=".8" fill="none"/><rect x="0.5" y="15.5" width="27.5" height="13" fill="#3a3a3a" stroke="#c2c2c2" stroke-width="1"/><path d="M2 18H5M2 21H5M2 24H5M7 22H13M10 19V25" stroke="#c2c2c2" stroke-width="1"/><path d="M9 22Q14 15 18 21Q21 26 26 19" stroke="#3fb6c6" stroke-width="1.2" fill="none"/></svg>
<div class="a" style="left:1px;top:658px;width:29px;height:30px;background:#3d3d3d;border:1px solid #333"></div>
<svg style="left:12px;top:671px;" width="7" height="4" viewBox="0 0 7 4"><path d="M0 0H6L3 3.5Z" fill="#ddd"/></svg>
<svg style="left:0px;top:740px;" width="32" height="30" viewBox="0 0 32 30"><path d="M0 10.2L15.8 1.2L31.9 10.5V29.8H25.1L22.4 21.6L15.8 29.3L9.2 21.6L6 29.8H0Z" fill="#129a9a"/><path d="M0 10.5L6.5 14L9.2 21.6L6 29.8H0Z" fill="#1de3e3"/><path d="M0 10.2L15.8 1.2L6.5 13.8Z" fill="#17a0a0"/><path d="M15.8 1.2L6.5 13.8L9.2 21.6L12 17Z" fill="#0b5f62"/><path d="M15.8 1.2L12 17L15.8 22.5L19.6 17Z" fill="#128585"/><path d="M15.8 1.2L19.6 17L22.4 21.6L25.1 13.8Z" fill="#0a5256"/><path d="M15.8 1.2L31.9 10.5L25.1 13.8Z" fill="#0f7c7c"/><path d="M25.1 13.8L31.9 10.5V29.8H25.1L22.4 21.6Z" fill="#149393"/><path d="M9.2 21.6L15.8 22.5L22.4 21.6L15.8 29.3Z" fill="#1ec2c2"/></svg>
<div class="a" style="left:39px;top:150px;width:998px;height:625px;border:1px solid #8c8c8c;background:#444"></div>
<div class="a" style="left:40px;top:194px;width:996px;height:580px;background:#5d5d5d"></div>
<div class="t" style="left:48px;top:156px;font-size:12px;color:#c8c8c8;">视图</div>
<div class="t" style="left:87px;top:156px;font-size:12px;color:#c8c8c8;">着色</div>
<div class="t" style="left:126px;top:156px;font-size:12px;color:#c8c8c8;">照明</div>
<div class="t" style="left:165px;top:156px;font-size:12px;color:#c8c8c8;">显示</div>
<div class="t" style="left:205px;top:156px;font-size:12px;color:#c8c8c8;">渲染器</div>
<div class="t" style="left:256px;top:156px;font-size:12px;color:#c8c8c8;">面板</div>
<div class="a" style="left:43px;top:175px;width:1px;height:16px;background:#8a8a8a"></div>
<div class="a" style="left:42px;top:180px;width:3px;height:6px;background:#8a8a8a;border-radius:1px"></div>
<svg style="left:52px;top:177px;" width="16" height="11" viewBox="0 0 16 11"><rect x="0.5" y="1.5" width="9.5" height="8" fill="#c2c2c2"/><path d="M11 5.5L15 1.5V9.5Z" fill="#c2c2c2"/></svg>
<svg style="left:73px;top:177px;" width="15" height="12" viewBox="0 0 15 12"><rect x="5" y="0.5" width="5" height="5" fill="none" stroke="#c2c2c2" stroke-width="1"/><path d="M10 4.5L14 1V9L10 6Z" fill="#c2c2c2"/><circle cx="4" cy="8" r="2.6" fill="none" stroke="#3fb6c6" stroke-width="1.6" stroke-dasharray="1.2 .8"/></svg>
<svg style="left:96px;top:177px;" width="8" height="11" viewBox="0 0 8 11"><path d="M0.5 0.5H7.5V10.5L4 7.5L0.5 10.5Z" fill="#c2c2c2"/></svg>
<svg style="left:113px;top:176px;" width="15" height="15" viewBox="0 0 15 15"><path d="M5 13V5L11 0V8Z" fill="#3fb6c6"/><path d="M1 14.5H13L14 12H3Z" fill="none" stroke="#c2c2c2" stroke-width="1"/><path d="M4 12.5H11" stroke="#c2c2c2"/></svg>
<svg style="left:133px;top:177px;" width="15" height="13" viewBox="0 0 15 13"><path d="M6 1V8M3 3L6 0L9 3M0.5 6L3 3.5V8.5ZM0.5 6H6" stroke="#c2c2c2" stroke-width="1.1" fill="#c2c2c2"/><circle cx="10.5" cy="7" r="2.6" fill="none" stroke="#3fb6c6" stroke-width="1.4"/><path d="M8.5 9L5 12.5" stroke="#3fb6c6" stroke-width="1.8"/></svg>
<svg style="left:153px;top:177px;" width="14" height="13" viewBox="0 0 14 13"><path d="M12.5 1.5L4 10" stroke="#c2c2c2" stroke-width="3" stroke-linecap="round"/><path d="M1 12.5L3 10" stroke="#3fb6c6" stroke-width="2"/><path d="M7 11Q10 9 12 12" stroke="#c2c2c2" stroke-width="1" fill="none"/></svg>
<div class="a" style="left:174px;top:175px;width:1px;height:16px;background:#8a8a8a"></div>
<div class="a" style="left:173px;top:180px;width:3px;height:6px;background:#8a8a8a;border-radius:1px"></div>
<div class="a" style="left:182px;top:174px;width:19px;height:19px;background:#5285a6;border-radius:2px"></div>
<svg style="left:185px;top:177px;" width="13" height="12" viewBox="0 0 13 12"><rect x="0.5" y="0.5" width="12" height="11" fill="#333" stroke="#c2c2c2" stroke-width="1"/><g fill="#c2c2c2"><rect x="2.0" y="2" width="2.2" height="2.2"/><rect x="2.0" y="5" width="2.2" height="2.2"/><rect x="2.0" y="8" width="2.2" height="2.2"/><rect x="5.2" y="2" width="2.2" height="2.2"/><rect x="5.2" y="5" width="2.2" height="2.2"/><rect x="5.2" y="8" width="2.2" height="2.2"/><rect x="8.4" y="2" width="2.2" height="2.2"/><rect x="8.4" y="5" width="2.2" height="2.2"/><rect x="8.4" y="8" width="2.2" height="2.2"/></g></svg>
<svg style="left:204px;top:177px;" width="15" height="13" viewBox="0 0 15 13"><rect x="0.5" y="0.5" width="14" height="12" fill="none" stroke="#c2c2c2" stroke-width="1"/><path d="M1 3H14M1 10H14" stroke="#c2c2c2" stroke-width="1" stroke-dasharray="1.5 1"/></svg>
<svg style="left:224px;top:177px;" width="15" height="13" viewBox="0 0 15 13"><rect x="0.5" y="0.5" width="14" height="12" fill="none" stroke="#c2c2c2" stroke-width="1"/><circle cx="7.5" cy="6.5" r="2.8" fill="#3fb6c6"/></svg>
<div class="a" style="left:242px;top:174px;width:19px;height:19px;background:#3a3a3a;border:1px solid #2a2a2a;border-radius:3px"></div>
<svg style="left:244px;top:176px;" width="15" height="15" viewBox="0 0 15 15"><rect x="0.5" y="0.5" width="14" height="14" fill="#4f4f4f"/><circle cx="7.5" cy="7.5" r="3.6" fill="#444"/></svg>
<svg style="left:264px;top:177px;" width="15" height="13" viewBox="0 0 15 13"><rect x="0.5" y="0.5" width="14" height="12" fill="none" stroke="#c2c2c2" stroke-width="1"/><path d="M2 6.5H13M7.5 2V11" stroke="#3fb6c6" stroke-width="1.2" stroke-dasharray="1.2 1"/></svg>
<svg style="left:284px;top:177px;" width="15" height="13" viewBox="0 0 15 13"><rect x="0.5" y="0.5" width="14" height="12" fill="none" stroke="#c2c2c2" stroke-width="1"/><path d="M4 10L6 6.5L8 10Z" fill="#3fb6c6"/><circle cx="9.5" cy="5" r="1.7" fill="#3fb6c6"/></svg>
<svg style="left:304px;top:177px;" width="15" height="13" viewBox="0 0 15 13"><rect x="0.5" y="0.5" width="14" height="12" fill="none" stroke="#c2c2c2" stroke-width="1"/><path d="M4 3.5H11M7.5 3.5V10" stroke="#3fb6c6" stroke-width="2"/></svg>
<div class="a" style="left:325px;top:175px;width:1px;height:16px;background:#8a8a8a"></div>
<div class="a" style="left:324px;top:180px;width:3px;height:6px;background:#8a8a8a;border-radius:1px"></div>
<svg style="left:335px;top:175px;" width="14" height="15" viewBox="0 0 14 15"><path d="M7 1L13 4V11L7 14L1 11V4Z M1 4L7 7L13 4M7 7V14" fill="none" stroke="#3fb6c6" stroke-width="1.3"/></svg>
<div class="a" style="left:353px;top:174px;width:19px;height:19px;background:#5285a6;border-radius:2px"></div>
<svg style="left:355px;top:175px;" width="15" height="16" viewBox="0 0 15 16"><path d="M7.5 1L14 4.5V11.5L7.5 15L1 11.5V4.5Z" fill="#9c9c9c" stroke="#333" stroke-width="1"/><path d="M1 4.5L7.5 8L14 4.5L7.5 1Z" fill="#c8c8c8" stroke="#333" stroke-width="1"/><path d="M7.5 8V15" stroke="#333" stroke-width="1"/><path d="M1 4.5L7.5 8V15L1 11.5Z" fill="#7a7a7a" stroke="#333" stroke-width="1"/></svg>
<svg style="left:376px;top:176px;" width="13" height="14" viewBox="0 0 13 14"><defs><clipPath id="hc"><circle cx="6.5" cy="7" r="6.3"/></clipPath></defs><path d="M6.5 0.7A6.3 6.3 0 0 0 6.5 13.3Z" fill="#c2c2c2"/><g clip-path="url(#hc)"><rect x="6.5" y="0.5" width="7" height="13" fill="#333"/><rect x="6.5" y="2.7" width="2.2" height="2.2" fill="#c2c2c2"/><rect x="6.5" y="7.1" width="2.2" height="2.2" fill="#c2c2c2"/><rect x="6.5" y="11.5" width="2.2" height="2.2" fill="#c2c2c2"/><rect x="8.7" y="0.5" width="2.2" height="2.2" fill="#c2c2c2"/><rect x="8.7" y="4.9" width="2.2" height="2.2" fill="#c2c2c2"/><rect x="8.7" y="9.3" width="2.2" height="2.2" fill="#c2c2c2"/><rect x="10.9" y="2.7" width="2.2" height="2.2" fill="#c2c2c2"/><rect x="10.9" y="7.1" width="2.2" height="2.2" fill="#c2c2c2"/><rect x="10.9" y="11.5" width="2.2" height="2.2" fill="#c2c2c2"/></g></svg>
<svg style="left:395px;top:175px;" width="14" height="15" viewBox="0 0 14 15"><path d="M7 1L13 4V11L7 14L1 11V4Z" fill="none" stroke="#3fb6c6" stroke-width="1.3"/><path d="M7 4L10 5.5V9.5L7 11L4 9.5V5.5Z" fill="#c2c2c2"/><path d="M1 4L4 5.5M13 4L10 5.5M7 11V14" stroke="#3fb6c6" stroke-width="1.2"/></svg>
<svg style="left:415px;top:176px;" width="13" height="14" viewBox="0 0 13 14"><defs><clipPath id="fc"><circle cx="6.5" cy="7" r="6.3"/></clipPath></defs><g clip-path="url(#fc)"><rect x="0" y="0.5" width="13" height="13" fill="#333"/><rect x="0.2" y="0.4" width="2.2" height="2.2" fill="#c2c2c2"/><rect x="0.2" y="4.8" width="2.2" height="2.2" fill="#c2c2c2"/><rect x="0.2" y="9.2" width="2.2" height="2.2" fill="#c2c2c2"/><rect x="2.4" y="2.6" width="2.2" height="2.2" fill="#c2c2c2"/><rect x="2.4" y="7.0" width="2.2" height="2.2" fill="#c2c2c2"/><rect x="2.4" y="11.4" width="2.2" height="2.2" fill="#c2c2c2"/><rect x="4.6" y="0.4" width="2.2" height="2.2" fill="#c2c2c2"/><rect x="4.6" y="4.8" width="2.2" height="2.2" fill="#c2c2c2"/><rect x="4.6" y="9.2" width="2.2" height="2.2" fill="#c2c2c2"/><rect x="6.8" y="2.6" width="2.2" height="2.2" fill="#c2c2c2"/><rect x="6.8" y="7.0" width="2.2" height="2.2" fill="#c2c2c2"/><rect x="6.8" y="11.4" width="2.2" height="2.2" fill="#c2c2c2"/><rect x="9.0" y="0.4" width="2.2" height="2.2" fill="#c2c2c2"/><rect x="9.0" y="4.8" width="2.2" height="2.2" fill="#c2c2c2"/><rect x="9.0" y="9.2" width="2.2" height="2.2" fill="#c2c2c2"/><rect x="11.2" y="2.6" width="2.2" height="2.2" fill="#c2c2c2"/><rect x="11.2" y="7.0" width="2.2" height="2.2" fill="#c2c2c2"/><rect x="11.2" y="11.4" width="2.2" height="2.2" fill="#c2c2c2"/></g></svg>
<svg style="left:434px;top:175px;" width="16" height="15" viewBox="0 0 16 15"><path d="M8 3A3.8 3.8 0 0 0 5.5 10V12H10.5V10A3.8 3.8 0 0 0 8 3Z" fill="#c2c2c2"/><rect x="6.5" y="12.5" width="3" height="2" fill="#c2c2c2"/><path d="M8 0V1.5M1 7H3M13 7H15M2.5 2.5L3.8 3.8M13.5 2.5L12.2 3.8" stroke="#c2c2c2" stroke-width="1"/></svg>
<svg style="left:455px;top:176px;" width="15" height="13" viewBox="0 0 15 13"><circle cx="10" cy="6" r="4.8" fill="#3fb6c6"/><path d="M0.5 8.5L4.5 12.5M2 7L5.5 10.5M3.5 5.5L6.5 8.5" stroke="#c2c2c2" stroke-width=".9"/></svg>
<div class="a" style="left:476px;top:175px;width:1px;height:16px;background:#8a8a8a"></div>
<div class="a" style="left:475px;top:180px;width:3px;height:6px;background:#8a8a8a;border-radius:1px"></div>
<svg style="left:487px;top:176px;" width="12" height="14" viewBox="0 0 12 14"><circle cx="6" cy="5.5" r="5" fill="#505050"/><path d="M1 9L6 12L11 9" stroke="#3e5c5e" stroke-width="1.2" fill="none"/></svg>
<svg style="left:505px;top:177px;" width="16" height="12" viewBox="0 0 16 12"><circle cx="10" cy="6" r="5.3" fill="#525252"/><path d="M4 1.5A6 6 0 0 0 4 10.5M1.5 2.5A6 6 0 0 0 1.5 9.5" stroke="#525252" stroke-width="1" fill="none"/></svg>
<svg style="left:527px;top:177px;" width="13" height="13" viewBox="0 0 13 13"><path d="M6.5 0.5A6 6 0 0 1 6.5 12.5" stroke="#3b6b70" stroke-width="1.6" fill="none"/><path d="M6.5 12.5A6 6 0 0 1 6.5 0.5" stroke="#555" stroke-width="1.6" fill="none" stroke-dasharray="1.5 1"/></svg>
<div class="a" style="left:544px;top:174px;width:19px;height:19px;background:#3a3a3a;border:1px solid #2a2a2a;border-radius:3px"></div>
<svg style="left:546px;top:176px;" width="15" height="15" viewBox="0 0 15 15"><rect x="1" y="5" width="8.5" height="8.5" fill="#4a5c5e"/><path d="M8 1L14 7M10.5 1L14 4.5M6 2L13 9" stroke="#555" stroke-width="1"/></svg>
<div class="a" style="left:567px;top:175px;width:1px;height:16px;background:#8a8a8a"></div>
<div class="a" style="left:566px;top:180px;width:3px;height:6px;background:#8a8a8a;border-radius:1px"></div>
<svg style="left:577px;top:176px;" width="14" height="15" viewBox="0 0 14 15"><rect x="0.5" y="0.5" width="8" height="7" fill="none" stroke="#3fb6c6" stroke-width="1.2" stroke-dasharray="1.6 1.2"/><path d="M6 5L13 11H10L11.8 14.5L10.3 15L8.6 11.7L6 13.5Z" fill="#c2c2c2"/></svg>
<div class="a" style="left:598px;top:175px;width:1px;height:16px;background:#8a8a8a"></div>
<div class="a" style="left:597px;top:180px;width:3px;height:6px;background:#8a8a8a;border-radius:1px"></div>
<svg style="left:608px;top:177px;" width="13" height="13" viewBox="0 0 13 13"><rect x="4.5" y="0.5" width="8" height="8" fill="none" stroke="#c2c2c2" stroke-width="1.6"/><rect x="0.5" y="4.5" width="8" height="8" fill="#c2c2c2" stroke="#444" stroke-width=".8"/></svg>
<svg style="left:628px;top:177px;" width="14" height="13" viewBox="0 0 14 13"><rect x="4.5" y="0.5" width="9" height="9" fill="none" stroke="#c2c2c2" stroke-width="1.3"/><rect x="7.5" y="3.5" width="3" height="3" fill="#c2c2c2"/><path d="M0.5 5V12.5H9" stroke="#3fb6c6" stroke-width="3.2" fill="none"/></svg>
<svg style="left:648px;top:176px;" width="14" height="14" viewBox="0 0 14 14"><rect x="0.5" y="0.5" width="13" height="13" fill="none" stroke="#c2c2c2" stroke-width="1.2"/><circle cx="4.5" cy="4.5" r="1.5" fill="#3fb6c6"/><path d="M5 5L10 10" stroke="#3fb6c6" stroke-width="1.6"/></svg>
<div class="a" style="left:669px;top:175px;width:1px;height:16px;background:#8a8a8a"></div>
<div class="a" style="left:668px;top:180px;width:3px;height:6px;background:#8a8a8a;border-radius:1px"></div>
<svg style="left:40px;top:194px;" width="996" height="580" viewBox="0 0 996 580"><path d="M497.50 161.00L131.70 289.80M497.50 161.00L864.30 289.80M509.07 165.06L142.01 297.05M485.94 165.07L853.97 297.06M520.89 169.21L152.61 304.51M474.13 169.23L843.35 304.53M532.97 173.45L163.53 312.18M462.07 173.47L832.42 312.22M545.31 177.79L174.76 320.08M449.75 177.81L821.17 320.13M557.92 182.21L186.33 328.22M437.16 182.25L809.59 328.28M570.81 186.74L198.25 336.60M424.29 186.78L797.65 336.67M583.99 191.37L210.54 345.24M411.13 191.41L785.35 345.32M597.47 196.10L223.21 354.16M397.67 196.15L772.66 354.24M611.26 200.95L236.29 363.35M383.90 201.00L759.57 363.45M625.38 205.90L249.79 372.85M369.82 205.96L746.07 372.95M639.83 210.98L263.73 382.65M355.40 211.03L732.11 382.76M669.77 221.49L293.04 403.26M325.54 221.55L702.80 403.38M685.29 226.94L308.45 414.10M310.06 227.00L687.38 414.22M701.20 232.53L324.41 425.32M294.20 232.58L671.43 425.44M717.50 238.25L340.93 436.94M277.94 238.31L654.90 437.06M734.22 244.12L358.06 448.99M261.27 244.18L637.78 449.10M751.37 250.14L375.83 461.48M244.18 250.19L620.03 461.59M768.96 256.32L394.26 474.45M226.65 256.37L601.60 474.54M787.02 262.66L413.41 487.91M208.66 262.70L582.47 488.00M805.57 269.18L433.31 501.91M190.18 269.21L562.59 501.98M824.61 275.86L454.01 516.46M171.21 275.89L541.92 516.51M844.18 282.74L475.55 531.62M151.73 282.75L520.41 531.64M864.30 289.80L498.00 547.40M131.70 289.80L498.00 547.40" stroke="#454545" stroke-width="1" fill="none" shape-rendering="crispEdges"/><path d="M654.62 216.17L278.14 392.78M340.65 216.23L717.70 392.90" stroke="#404040" stroke-width="2" fill="none" shape-rendering="crispEdges"/></svg>
<svg style="left:940px;top:205px;" width="90" height="90" viewBox="0 0 90 90"><defs><radialGradient id="sh" cx="0.5" cy="0.55" r="0.5"><stop offset="0.55" stop-color="#000" stop-opacity=".16"/><stop offset="1" stop-color="#000" stop-opacity="0"/></radialGradient><linearGradient id="lf" x1="0" y1="0" x2="0" y2="1"><stop offset="0" stop-color="#a2a2a2"/><stop offset="1" stop-color="#949494"/></linearGradient><linearGradient id="rf" x1="0" y1="0" x2="0" y2="1"><stop offset="0" stop-color="#a3a3a3"/><stop offset="1" stop-color="#959595"/></linearGradient></defs><ellipse cx="43.5" cy="47" rx="43" ry="43" fill="url(#sh)"/><path d="M43.4 9.2L77.1 20.8L43.4 34.1L9.9 20.8Z" fill="#a4a4a4"/><path d="M9.9 20.8L43.4 34.1V78.6L11.9 62.6Z" fill="url(#lf)"/><path d="M43.4 34.1L77.1 20.8L74.8 62.6L43.4 78.6Z" fill="url(#rf)"/><path d="M9.9 20.8L43.4 34.1L77.1 20.8" stroke="#8a8a8a" stroke-width=".7" fill="none" stroke-dasharray="2 1.5"/><path d="M43.4 34.1V78.6" stroke="#5a5a5a" stroke-width="1"/><g transform="matrix(0.335 0.133 0.02 0.418 9.9 20.8)"><text x="50" y="72" font-size="56" fill="#7e7e7e" text-anchor="middle">前</text></g><g transform="matrix(0.337 -0.133 -0.023 0.445 43.4 34.1)"><text x="50" y="70" font-size="54" fill="#7e7e7e" text-anchor="middle">右</text></g><g transform="matrix(0.337 0.116 -0.335 0.116 43.4 9.2)"><text x="50" y="70" font-size="54" fill="#858585" text-anchor="middle">上</text></g></svg>
<div class="t" style="left:497px;top:233px;font-size:11px;color:#ffffff;font-weight:bold;letter-spacing:1px">打开大写锁定</div>
<div class="t" style="left:516px;top:757px;font-size:10px;color:#ffffff;font-family:Liberation Mono,monospace;font-weight:bold;letter-spacing:1.1px">persp</div>
<svg style="left:50px;top:726px;" width="32" height="28" viewBox="0 0 32 28"><path d="M15.5 10V22.5" stroke="#00ff00" stroke-width="1"/><path d="M15.5 22.5L5 26.5" stroke="#0000ff" stroke-width="1"/><path d="M15.5 22.5L26 26.5" stroke="#ff0000" stroke-width="1"/><path d="M12 2.5H18M15 2.5L14 7.5H12" stroke="#00ff00" stroke-width="1.4" fill="none"/><path d="M2 21.5H7L2 26H7" stroke="#0000ff" stroke-width="1.4" fill="none"/><path d="M23.5 21.5L28.5 26M28.5 21.5L23.5 26" stroke="#ff0000" stroke-width="1.4"/></svg>
<div class="a" style="left:1048px;top:157px;width:1px;height:1px;background:#8a8a8a;box-shadow:3px 0px #8a8a8a,6px 0px #8a8a8a,9px 0px #8a8a8a,12px 0px #8a8a8a,15px 0px #8a8a8a,18px 0px #8a8a8a,21px 0px #8a8a8a,24px 0px #8a8a8a,27px 0px #8a8a8a,30px 0px #8a8a8a,33px 0px #8a8a8a,36px 0px #8a8a8a,39px 0px #8a8a8a,42px 0px #8a8a8a,45px 0px #8a8a8a,48px 0px #8a8a8a,0px 3px #8a8a8a,3px 3px #8a8a8a,6px 3px #8a8a8a,9px 3px #8a8a8a,12px 3px #8a8a8a,15px 3px #8a8a8a,18px 3px #8a8a8a,21px 3px #8a8a8a,24px 3px #8a8a8a,27px 3px #8a8a8a,30px 3px #8a8a8a,33px 3px #8a8a8a,36px 3px #8a8a8a,39px 3px #8a8a8a,42px 3px #8a8a8a,45px 3px #8a8a8a,48px 3px #8a8a8a"></div>
<div class="t" style="left:1103px;top:153px;font-size:11.3px;color:#c8c8c8;">通道盒/层编辑器</div>
<div class="a" style="left:1193px;top:157px;width:1px;height:1px;background:#8a8a8a;box-shadow:3px 0px #8a8a8a,6px 0px #8a8a8a,9px 0px #8a8a8a,12px 0px #8a8a8a,15px 0px #8a8a8a,18px 0px #8a8a8a,21px 0px #8a8a8a,24px 0px #8a8a8a,27px 0px #8a8a8a,30px 0px #8a8a8a,33px 0px #8a8a8a,36px 0px #8a8a8a,39px 0px #8a8a8a,42px 0px #8a8a8a,45px 0px #8a8a8a,0px 3px #8a8a8a,3px 3px #8a8a8a,6px 3px #8a8a8a,9px 3px #8a8a8a,12px 3px #8a8a8a,15px 3px #8a8a8a,18px 3px #8a8a8a,21px 3px #8a8a8a,24px 3px #8a8a8a,27px 3px #8a8a8a,30px 3px #8a8a8a,33px 3px #8a8a8a,36px 3px #8a8a8a,39px 3px #8a8a8a,42px 3px #8a8a8a,45px 3px #8a8a8a"></div>
<div class="a" style="left:1244px;top:152px;width:13px;height:14px;background:#3a3a3a;border:1px solid #2a2a2a;border-radius:3px"></div>
<svg style="left:1246px;top:154px;" width="10" height="10" viewBox="0 0 10 10"><rect x="3.5" y="0.5" width="6" height="5" fill="none" stroke="#c2c2c2" stroke-width="1"/><rect x="0.5" y="4.5" width="6" height="5" fill="#3a3a3a" stroke="#c2c2c2" stroke-width="1.2"/></svg>
<div class="a" style="left:1259px;top:152px;width:12px;height:14px;background:#3a3a3a;border:1px solid #2a2a2a;border-radius:3px"></div>
<svg style="left:1261px;top:155px;" width="9" height="9" viewBox="0 0 9 9"><path d="M1 1L8 8M8 1L1 8" stroke="#c2c2c2" stroke-width="2"/></svg>
<svg style="left:1211px;top:172px;" width="18" height="16" viewBox="0 0 18 16"><path d="M10 8V3" stroke="#ccc" stroke-width="1"/><path d="M10 0L13 6H7Z" fill="#22cc22"/><path d="M10 8L3 6.5" stroke="#ccc" stroke-width="1"/><path d="M0 6L6 3.5V9.5Z" fill="#2233cc"/><path d="M10 8L14 11" stroke="#ccc"/><path d="M17 14L11 13.5L14.5 9Z" fill="#dd2222"/></svg>
<svg style="left:1234px;top:172px;" width="15" height="15" viewBox="0 0 15 15"><circle cx="7.5" cy="7.5" r="6.8" fill="none" stroke="#555" stroke-width="1"/><path d="M7.5 1.5V7.5L3.5 12.5A6 6 0 0 1 7.5 1.5Z" fill="#3d5c3d"/><path d="M7.5 1.5A6 6 0 0 1 11.5 12.5L7.5 7.5Z" fill="#444"/></svg>
<svg style="left:1255px;top:173px;" width="14" height="14" viewBox="0 0 14 14"><path d="M1 13L12 2M7 2H12V7" stroke="#6e3b3b" stroke-width="1.2" fill="none"/></svg>
<div class="t" style="left:1054px;top:197px;font-size:12px;color:#c8c8c8;">通道</div>
<div class="t" style="left:1093px;top:197px;font-size:12px;color:#c8c8c8;">编辑</div>
<div class="t" style="left:1132px;top:197px;font-size:12px;color:#c8c8c8;">对象</div>
<div class="t" style="left:1171px;top:197px;font-size:12px;color:#c8c8c8;">显示</div>
<div class="a" style="left:1047px;top:216px;width:223px;height:379px;background:#2b2b2b"></div>
<div class="a" style="left:1045px;top:596px;width:225px;height:2px;background:#383838"></div>
<div class="a" style="left:1046px;top:607px;width:48px;height:25px;background:#6b6b6b;border-radius:3px 3px 0 0"></div>
<div class="t" style="left:1058px;top:614px;font-size:12px;color:#eeeeee;">显示</div>
<div class="a" style="left:1095px;top:607px;width:47px;height:25px;background:#363636;border-radius:3px 3px 0 0"></div>
<div class="t" style="left:1106px;top:614px;font-size:12px;color:#b4b4b4;">渲染</div>
<div class="a" style="left:1143px;top:607px;width:46px;height:25px;background:#363636;border-radius:3px 3px 0 0"></div>
<div class="t" style="left:1154px;top:614px;font-size:12px;color:#b4b4b4;">动画</div>
<div class="a" style="left:1046px;top:632px;width:224px;height:142px;border:1px solid #333;border-right:none;background:#474747"></div>
<div class="t" style="left:1057px;top:640px;font-size:12px;color:#c8c8c8;">层</div>
<div class="t" style="left:1084px;top:640px;font-size:12px;color:#c8c8c8;">选项</div>
<div class="t" style="left:1123px;top:640px;font-size:12px;color:#c8c8c8;">帮助</div>
<svg style="left:1174px;top:662px;" width="16" height="13" viewBox="0 0 16 13"><path d="M0.5 8L6 4L11 6.5L6 12.5Z" fill="#c2c2c2"/><path d="M11 0.5L14.5 4.5H12.5V10H9.5V4.5H7.5Z" fill="#3fb6c6"/></svg>
<svg style="left:1197px;top:662px;" width="16" height="13" viewBox="0 0 16 13"><path d="M0.5 8L6 4L11 6.5L6 12.5Z" fill="#c2c2c2"/><path d="M11 12.5L14.5 8.5H12.5V3H9.5V8.5H7.5Z" fill="#3fb6c6"/></svg>
<svg style="left:1224px;top:662px;" width="16" height="13" viewBox="0 0 16 13"><path d="M0.5 9L7 5L12 7.5L6 12.5Z" fill="#c2c2c2"/><path d="M9 4H16M12.5 0.5V7.5" stroke="#3fb6c6" stroke-width="2.2"/></svg>
<svg style="left:1248px;top:662px;" width="14" height="13" viewBox="0 0 14 13"><path d="M0.5 8.5L6 5L11 7.5L5.5 12.5Z" fill="#c2c2c2"/><circle cx="10" cy="3.8" r="3.5" fill="#3fb6c6"/></svg>
<div class="a" style="left:1050px;top:684px;width:217px;height:74px;background:#2b2b2b"></div>
<div class="a" style="left:1050px;top:758px;width:217px;height:12px;background:#3a3a3a"></div>
<div class="a" style="left:1063px;top:758px;width:117px;height:11px;background:#5a5a5a;border-radius:5px"></div>
<svg style="left:1053px;top:759px;" width="6" height="9" viewBox="0 0 6 9"><path d="M5.5 0.5V8.5L0.5 4.5Z" fill="#bdbdbd"/></svg>
<svg style="left:1258px;top:759px;" width="6" height="9" viewBox="0 0 6 9"><path d="M0.5 0.5V8.5L5.5 4.5Z" fill="#bdbdbd"/></svg>
<div class="a" style="left:0px;top:775px;width:1270px;height:2px;background:#383838"></div>
<div class="a" style="left:1px;top:780px;width:1px;height:1px;background:#8a8a8a;box-shadow:3px 0px #8a8a8a,0px 3px #8a8a8a,3px 3px #8a8a8a,0px 6px #8a8a8a,3px 6px #8a8a8a,0px 9px #8a8a8a,3px 9px #8a8a8a,0px 12px #8a8a8a,3px 12px #8a8a8a,0px 15px #8a8a8a,3px 15px #8a8a8a,0px 18px #8a8a8a,3px 18px #8a8a8a,0px 21px #8a8a8a,3px 21px #8a8a8a,0px 24px #8a8a8a,3px 24px #8a8a8a"></div>
<div class="a" style="left:11px;top:780px;width:988px;height:28px;background:#2b2b2b"></div>
<div class="a" style="left:17px;top:780px;width:6px;height:28px;background:#555555"></div>
<div class="t" style="left:19px;top:793px;font-size:11px;color:#f0f0f0;">1</div>
<div class="a" style="left:48px;top:797px;width:2px;height:11px;background:#8c8c8c"></div>
<div class="t" style="left:50px;top:781px;font-size:12px;color:#8e8e8e;width:40px;overflow:hidden">5</div>
<div class="a" style="left:89px;top:797px;width:2px;height:11px;background:#8c8c8c"></div>
<div class="t" style="left:91px;top:781px;font-size:12px;color:#8e8e8e;width:40px;overflow:hidden">10</div>
<div class="a" style="left:130px;top:797px;width:2px;height:11px;background:#8c8c8c"></div>
<div class="t" style="left:132px;top:781px;font-size:12px;color:#8e8e8e;width:40px;overflow:hidden">15</div>
<div class="a" style="left:170px;top:797px;width:2px;height:11px;background:#8c8c8c"></div>
<div class="t" style="left:172px;top:781px;font-size:12px;color:#8e8e8e;width:40px;overflow:hidden">20</div>
<div class="a" style="left:211px;top:797px;width:2px;height:11px;background:#8c8c8c"></div>
<div class="t" style="left:213px;top:781px;font-size:12px;color:#8e8e8e;width:40px;overflow:hidden">25</div>
<div class="a" style="left:252px;top:797px;width:2px;height:11px;background:#8c8c8c"></div>
<div class="t" style="left:254px;top:781px;font-size:12px;color:#8e8e8e;width:40px;overflow:hidden">30</div>
<div class="a" style="left:293px;top:797px;width:2px;height:11px;background:#8c8c8c"></div>
<div class="t" style="left:295px;top:781px;font-size:12px;color:#8e8e8e;width:40px;overflow:hidden">35</div>
<div class="a" style="left:333px;top:797px;width:2px;height:11px;background:#8c8c8c"></div>
<div class="t" style="left:335px;top:781px;font-size:12px;color:#8e8e8e;width:40px;overflow:hidden">40</div>
<div class="a" style="left:374px;top:797px;width:2px;height:11px;background:#8c8c8c"></div>
<div class="t" style="left:376px;top:781px;font-size:12px;color:#8e8e8e;width:40px;overflow:hidden">45</div>
<div class="a" style="left:415px;top:797px;width:2px;height:11px;background:#8c8c8c"></div>
<div class="t" style="left:417px;top:781px;font-size:12px;color:#8e8e8e;width:40px;overflow:hidden">50</div>
<div class="a" style="left:456px;top:797px;width:2px;height:11px;background:#8c8c8c"></div>
<div class="t" style="left:458px;top:781px;font-size:12px;color:#8e8e8e;width:40px;overflow:hidden">55</div>
<div class="a" style="left:496px;top:797px;width:2px;height:11px;background:#8c8c8c"></div>
<div class="t" style="left:498px;top:781px;font-size:12px;color:#8e8e8e;width:40px;overflow:hidden">60</div>
<div class="a" style="left:537px;top:797px;width:2px;height:11px;background:#8c8c8c"></div>
<div class="t" style="left:539px;top:781px;font-size:12px;color:#8e8e8e;width:40px;overflow:hidden">65</div>
<div class="a" style="left:578px;top:797px;width:2px;height:11px;background:#8c8c8c"></div>
<div class="t" style="left:580px;top:781px;font-size:12px;color:#8e8e8e;width:40px;overflow:hidden">70</div>
<div class="a" style="left:619px;top:797px;width:2px;height:11px;background:#8c8c8c"></div>
<div class="t" style="left:621px;top:781px;font-size:12px;color:#8e8e8e;width:40px;overflow:hidden">75</div>
<div class="a" style="left:659px;top:797px;width:2px;height:11px;background:#8c8c8c"></div>
<div class="t" style="left:661px;top:781px;font-size:12px;color:#8e8e8e;width:40px;overflow:hidden">80</div>
<div class="a" style="left:700px;top:797px;width:2px;height:11px;background:#8c8c8c"></div>
<div class="t" style="left:702px;top:781px;font-size:12px;color:#8e8e8e;width:40px;overflow:hidden">85</div>
<div class="a" style="left:741px;top:797px;width:2px;height:11px;background:#8c8c8c"></div>
<div class="t" style="left:743px;top:781px;font-size:12px;color:#8e8e8e;width:40px;overflow:hidden">90</div>
<div class="a" style="left:782px;top:797px;width:2px;height:11px;background:#8c8c8c"></div>
<div class="t" style="left:784px;top:781px;font-size:12px;color:#8e8e8e;width:40px;overflow:hidden">95</div>
<div class="a" style="left:822px;top:797px;width:2px;height:11px;background:#8c8c8c"></div>
<div class="t" style="left:824px;top:781px;font-size:12px;color:#8e8e8e;width:40px;overflow:hidden">100</div>
<div class="a" style="left:863px;top:797px;width:2px;height:11px;background:#8c8c8c"></div>
<div class="t" style="left:865px;top:781px;font-size:12px;color:#8e8e8e;width:40px;overflow:hidden">105</div>
<div class="a" style="left:904px;top:797px;width:2px;height:11px;background:#8c8c8c"></div>
<div class="t" style="left:906px;top:781px;font-size:12px;color:#8e8e8e;width:40px;overflow:hidden">110</div>
<div class="a" style="left:945px;top:797px;width:2px;height:11px;background:#8c8c8c"></div>
<div class="t" style="left:947px;top:781px;font-size:12px;color:#8e8e8e;width:40px;overflow:hidden">115</div>
<div class="a" style="left:985px;top:797px;width:2px;height:11px;background:#8c8c8c"></div>
<div class="t" style="left:987px;top:781px;font-size:12px;color:#8e8e8e;width:12px;overflow:hidden">120</div>
<div class="a" style="left:1006px;top:786px;width:68px;height:21px;background:#2b2b2b;border-radius:3px"></div>
<div class="t" style="left:1013px;top:792px;font-size:11px;color:#d0d0d0;">1</div>
<svg style="left:1083px;top:788px;" width="18" height="13" viewBox="0 0 18 13"><rect x="0.5" y="0" width="2.5" height="12" fill="#c2c2c2"/><path d="M3.5 6L10 0.5V11.5Z M10 6L17 0.5V11.5Z" fill="#c2c2c2"/></svg>
<svg style="left:1108px;top:788px;" width="14" height="13" viewBox="0 0 14 13"><rect x="0.5" y="0" width="2.5" height="12" fill="#c2c2c2"/><path d="M4 6L13 0.5V11.5Z" fill="#c2c2c2"/></svg>
<svg style="left:1130px;top:785px;" width="15" height="18" viewBox="0 0 15 18"><rect x="1" y="3" width="3.2" height="12" fill="#e0883e"/><rect x="2" y="0" width="1.2" height="1.5" fill="#bbb"/><rect x="2" y="16.5" width="1.2" height="1.5" fill="#bbb"/><path d="M5 9L14 3.5V14.5Z" fill="#c2c2c2"/></svg>
<svg style="left:1154px;top:785px;" width="14" height="18" viewBox="0 0 14 18"><path d="M0.5 9L13.5 0.8V17.2Z" fill="#c2c2c2"/></svg>
<svg style="left:1177px;top:785px;" width="14" height="18" viewBox="0 0 14 18"><path d="M13.5 9L0.5 0.8V17.2Z" fill="#c2c2c2"/></svg>
<svg style="left:1200px;top:785px;" width="15" height="18" viewBox="0 0 15 18"><path d="M10 9L1 3.5V14.5Z" fill="#c2c2c2"/><rect x="10.8" y="3" width="3.2" height="12" fill="#e0883e"/><rect x="11.8" y="0" width="1.2" height="1.5" fill="#bbb"/><rect x="11.8" y="16.5" width="1.2" height="1.5" fill="#bbb"/></svg>
<svg style="left:1223px;top:788px;" width="14" height="13" viewBox="0 0 14 13"><path d="M10 6L0.5 0.5V11.5Z" fill="#c2c2c2"/><rect x="10.8" y="0" width="2.5" height="12" fill="#c2c2c2"/></svg>
<svg style="left:1244px;top:788px;" width="18" height="13" viewBox="0 0 18 13"><path d="M7 6L0.5 0.5V11.5Z M14 6L7 0.5V11.5Z" fill="#c2c2c2"/><rect x="14.5" y="0" width="2.5" height="12" fill="#c2c2c2"/></svg>
<div class="a" style="left:0px;top:810px;width:1270px;height:2px;background:#444"></div>
<div class="a" style="left:1px;top:816px;width:1px;height:1px;background:#8a8a8a;box-shadow:3px 0px #8a8a8a,0px 3px #8a8a8a,3px 3px #8a8a8a,0px 6px #8a8a8a,3px 6px #8a8a8a,0px 9px #8a8a8a,3px 9px #8a8a8a,0px 12px #8a8a8a,3px 12px #8a8a8a,0px 15px #8a8a8a,3px 15px #8a8a8a,0px 18px #8a8a8a,3px 18px #8a8a8a,0px 21px #8a8a8a,3px 21px #8a8a8a"></div>
<div class="a" style="left:12px;top:817px;width:68px;height:23px;background:#2b2b2b;border-radius:3px"></div>
<div class="t" style="left:19px;top:824px;font-size:11px;color:#d0d0d0;">1</div>
<div class="a" style="left:88px;top:817px;width:68px;height:23px;background:#2b2b2b;border-radius:3px"></div>
<div class="t" style="left:95px;top:824px;font-size:11px;color:#d0d0d0;">1</div>
<div class="a" style="left:163px;top:817px;width:640px;height:23px;background:#393939"></div>
<div class="a" style="left:167px;top:819px;width:391px;height:19px;background:#5f5f5f;border-radius:3px"></div>
<div class="a" style="left:171px;top:822px;width:12px;height:13px;background:#999;border-radius:2px"></div>
<div class="t" style="left:187px;top:824px;font-size:12px;color:#d0d0d0;">1</div>
<div class="t" style="left:517px;top:824px;font-size:12px;color:#d0d0d0;">120</div>
<div class="a" style="left:541px;top:822px;width:12px;height:13px;background:#999;border-radius:2px"></div>
<div class="a" style="left:810px;top:817px;width:68px;height:23px;background:#2b2b2b;border-radius:3px"></div>
<div class="t" style="left:817px;top:824px;font-size:12px;color:#d0d0d0;">120</div>
<div class="a" style="left:886px;top:817px;width:68px;height:23px;background:#2b2b2b;border-radius:3px"></div>
<div class="t" style="left:892px;top:824px;font-size:12px;color:#d0d0d0;">200</div>
<svg style="left:960px;top:825px;" width="10" height="6" viewBox="0 0 10 6"><path d="M0.5 0.5H9.5L5 5.5Z" fill="none" stroke="#aaa" stroke-width="1"/></svg>
<div class="a" style="left:977px;top:817px;width:101px;height:23px;border:1px solid #555;border-radius:3px"></div>
<div class="t" style="left:983px;top:823px;font-size:12px;color:#c8c8c8;">无动画层</div>
<svg style="left:1088px;top:825px;" width="10" height="6" viewBox="0 0 10 6"><path d="M0.5 0.5H9.5L5 5.5Z" fill="none" stroke="#aaa" stroke-width="1"/></svg>
<div class="a" style="left:1105px;top:816px;width:102px;height:25px;border:1px solid #555;border-radius:3px"></div>
<div class="t" style="left:1112px;top:823px;font-size:12px;color:#c8c8c8;">无角色集</div>
<svg style="left:1215px;top:819px;" width="18" height="18" viewBox="0 0 18 18"><path d="M3 5A7.5 7.5 0 0 1 16 7M15 13A7.5 7.5 0 0 1 2 11" stroke="#c2c2c2" stroke-width="1.3" fill="none"/><path d="M14 4L17 8L12.5 8Z M4 14L1 10L5.5 10Z" fill="#c2c2c2"/><path d="M9 4.5V13.5M5 9H7M11 9H13" stroke="#e0883e" stroke-width="1.8"/></svg>
<svg style="left:1243px;top:818px;" width="20" height="19" viewBox="0 0 20 19"><circle cx="4.5" cy="5" r="3" fill="none" stroke="#c2c2c2" stroke-width="1.6" stroke-dasharray="1.3 .9"/><circle cx="15" cy="3" r="2" fill="#e0883e"/><path d="M13 6L9.5 12L5 17M10 11L14.5 14L13 18M12 7L17 9.5M12.5 7L7.5 9" stroke="#e0883e" stroke-width="2.4" fill="none" stroke-linecap="round"/></svg></body></html>
